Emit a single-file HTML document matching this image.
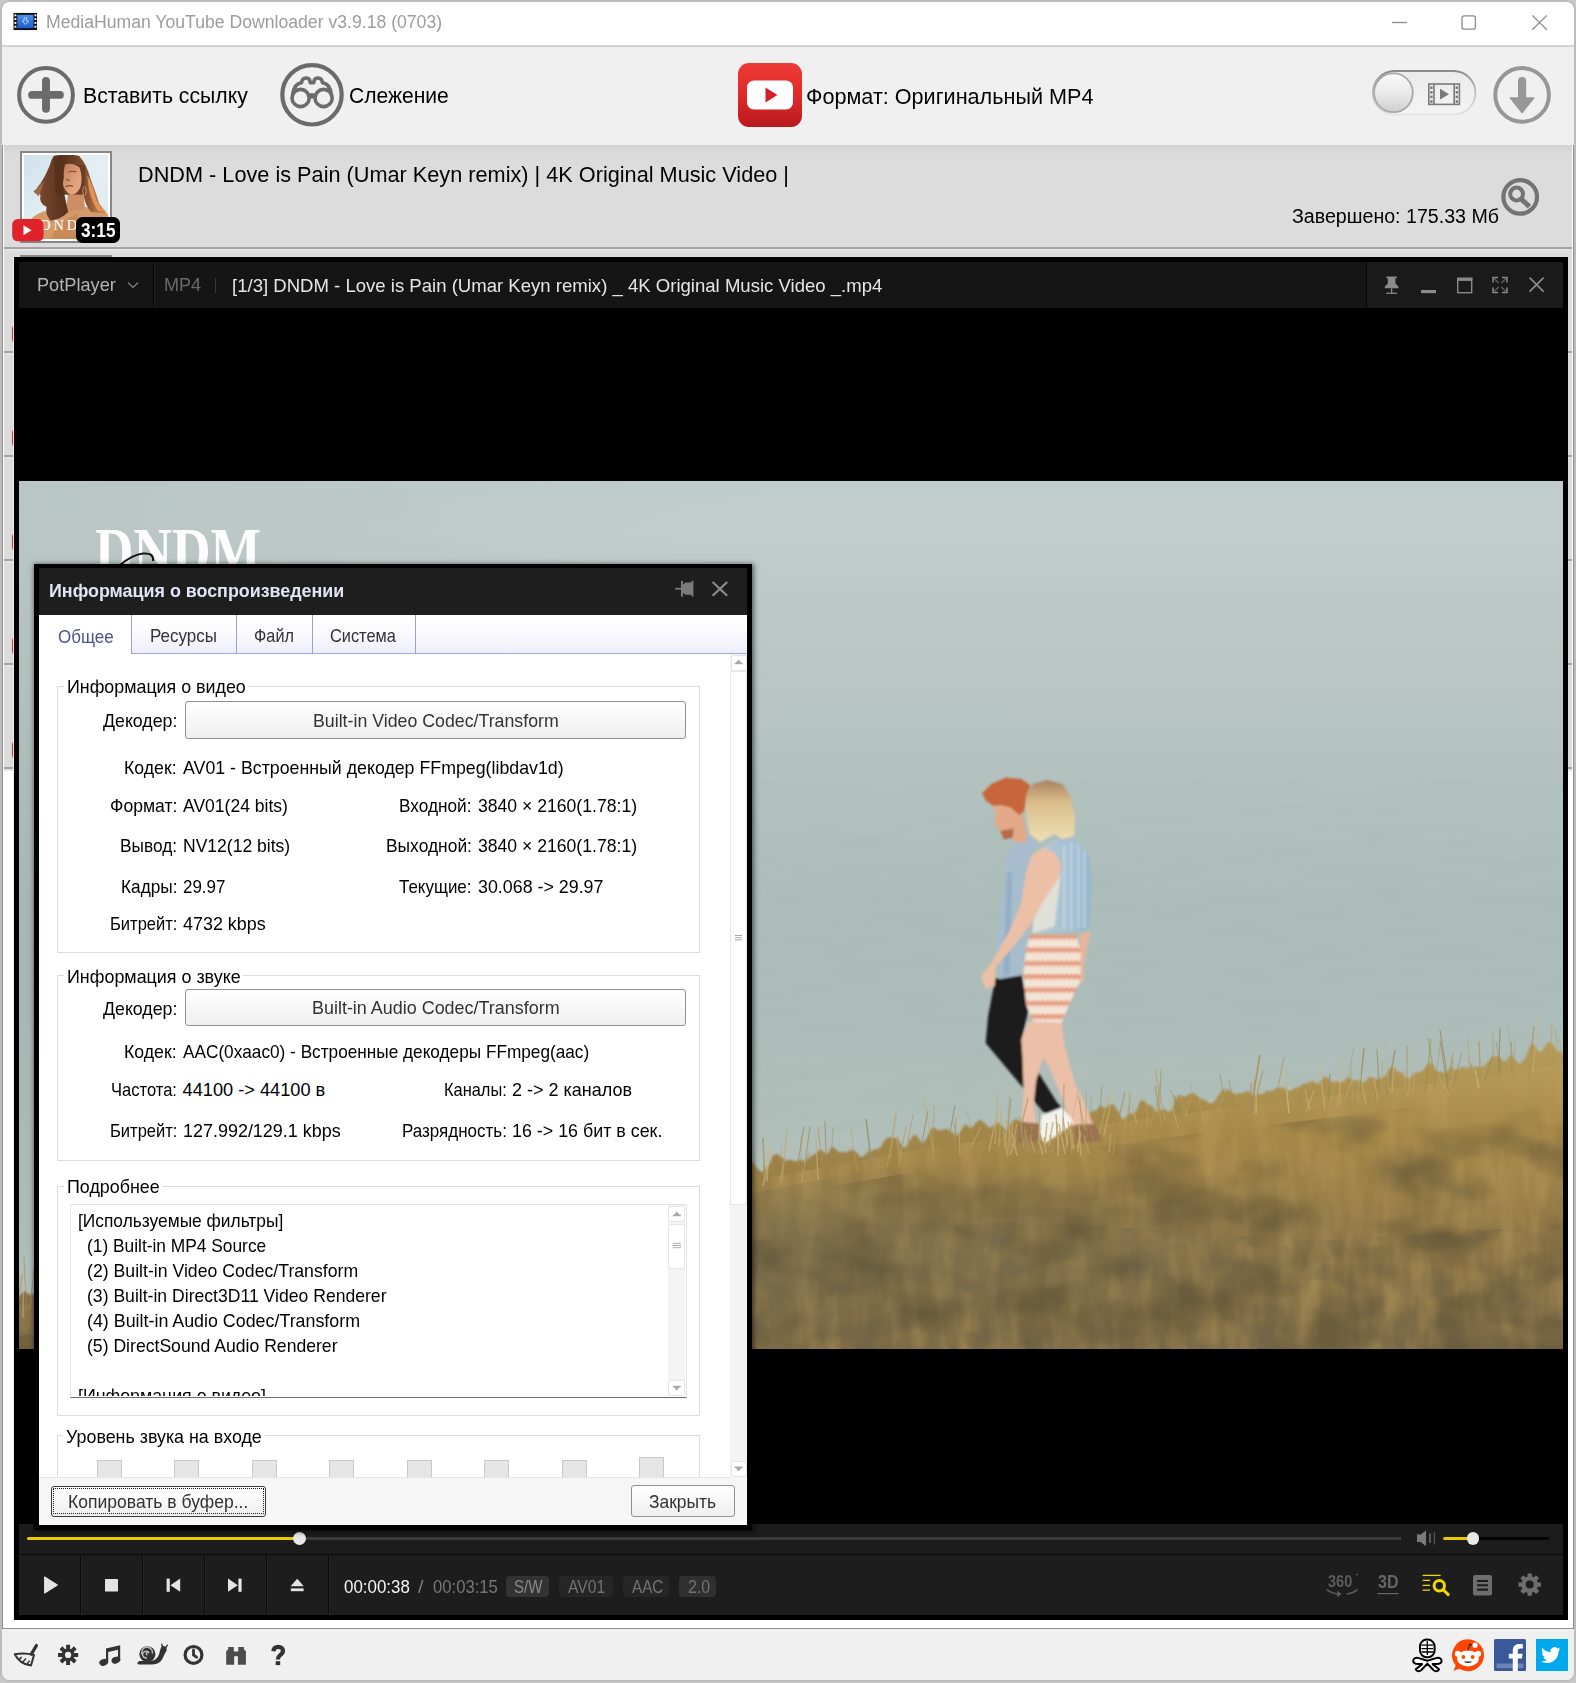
<!DOCTYPE html>
<html lang="ru">
<head>
<meta charset="utf-8">
<title>MediaHuman YouTube Downloader</title>
<style>
*{box-sizing:border-box;margin:0;padding:0}
html,body{width:1576px;height:1683px;overflow:hidden;background:#c9c9c9;font-family:"Liberation Sans",sans-serif}
body{font-family:"Liberation Sans",sans-serif;position:relative;color:#000}
.a{position:absolute}
.t{position:absolute;white-space:nowrap;line-height:1;transform-origin:0 50%;display:block}
</style>
</head>
<body>
<div class="a" style="left:0px;top:0px;width:1576px;height:1683px;background:#c9c9c9"></div>
<div class="a" style="left:0;top:0;width:1576px;height:1682px;background:#fff;border:2px solid #bcbcbc;border-radius:10px;overflow:hidden"></div>
<div class="a" style="left:2px;top:2px;width:1572px;height:43px;background:#fff;border-radius:8px 8px 0 0"></div>
<div class="a" style="left:2px;top:45px;width:1572px;height:2px;background:#d2d2d2"></div>
<div class="a" style="left:2px;top:47px;width:1572px;height:98px;background:#f0f0f0"></div>
<div class="a" style="left:2px;top:145px;width:1572px;height:1483px;background:#fff"></div>
<div class="a" style="left:2px;top:145px;width:1px;height:1483px;background:#8c8e92"></div>
<div class="a" style="left:1573px;top:145px;width:1px;height:1483px;background:#8c8e92"></div>
<div class="a" style="left:4px;top:145px;width:1568px;height:623px;background:#dcdcdc"></div>
<div class="a" style="left:4px;top:145px;width:1568px;height:10px;background:linear-gradient(#d2d2d2,#dcdcdc)"></div>
<div class="a" style="left:4px;top:247px;width:1568px;height:2px;background:#a5a3a3"></div>
<div class="a" style="left:4px;top:249px;width:1568px;height:2px;background:#e6e5e5"></div>
<div class="a" style="left:4px;top:351px;width:1568px;height:2px;background:#a5a3a3"></div>
<div class="a" style="left:4px;top:353px;width:1568px;height:2px;background:#e6e5e5"></div>
<div class="a" style="left:4px;top:455px;width:1568px;height:2px;background:#a5a3a3"></div>
<div class="a" style="left:4px;top:457px;width:1568px;height:2px;background:#e6e5e5"></div>
<div class="a" style="left:4px;top:559px;width:1568px;height:2px;background:#a5a3a3"></div>
<div class="a" style="left:4px;top:561px;width:1568px;height:2px;background:#e6e5e5"></div>
<div class="a" style="left:4px;top:663px;width:1568px;height:2px;background:#a5a3a3"></div>
<div class="a" style="left:4px;top:665px;width:1568px;height:2px;background:#e6e5e5"></div>
<div class="a" style="left:4px;top:767px;width:1568px;height:2px;background:#a5a3a3"></div>
<div class="a" style="left:4px;top:769px;width:1568px;height:2px;background:#e6e5e5"></div>
<div class="a" style="left:12px;top:323px;width:32px;height:22px;background:#e5262f;border-radius:6px"></div>
<div class="a" style="left:12px;top:427px;width:32px;height:22px;background:#e5262f;border-radius:6px"></div>
<div class="a" style="left:12px;top:531px;width:32px;height:22px;background:#e5262f;border-radius:6px"></div>
<div class="a" style="left:12px;top:635px;width:32px;height:22px;background:#e5262f;border-radius:6px"></div>
<div class="a" style="left:12px;top:739px;width:32px;height:22px;background:#e5262f;border-radius:6px"></div>
<div class="a" style="left:20px;top:255px;width:92px;height:2px;background:#8a8a8a"></div>
<div class="a" style="left:2px;top:1628px;width:1572px;height:1px;background:#8c8e92"></div>
<div class="a" style="left:2px;top:1629px;width:1572px;height:51px;background:#f0f0f0;border-radius:0 0 8px 8px"></div>
<svg class="a" style="left:12.600px;top:12.400px" width="24.800" height="19" viewBox="0 0 26 20" preserveAspectRatio="none">
<defs><linearGradient id="fb" x1="0" y1="0" x2="0" y2="1"><stop offset="0" stop-color="#4a8df0"/><stop offset="1" stop-color="#1c5fd0"/></linearGradient></defs>
<rect x=".5" y="1" width="25" height="18" fill="#111"/>
<rect x="4.5" y="3" width="17" height="14" fill="url(#fb)"/>
<g fill="#fff"><rect x="1.5" y="2.5" width="2" height="2"/><rect x="1.5" y="6.5" width="2" height="2"/><rect x="1.5" y="10.5" width="2" height="2"/><rect x="1.5" y="14.5" width="2" height="2"/>
<rect x="22.5" y="2.5" width="2" height="2"/><rect x="22.5" y="6.5" width="2" height="2"/><rect x="22.5" y="10.5" width="2" height="2"/><rect x="22.5" y="14.5" width="2" height="2"/></g>
<path d="M11.6 6.2h2.8v3.3h1.9L13 13.2 9.7 9.5h1.9z" fill="none" stroke="#cfe0ff" stroke-width=".9"/>
</svg>
<span class="t" style="left:45.80px;top:13.38px;font-size:18.8px;color:#9c9c9c;transform:scaleX(0.9382);">MediaHuman YouTube Downloader v3.9.18 (0703)</span>
<svg class="a" style="left:1380px;top:8px" width="180" height="30" viewBox="1380 8 180 30" fill="none" stroke="#8c8c8c" stroke-width="1.3">
<path d="M1392 22.5H1407"/><rect x="1462" y="15.8" width="13.4" height="13.4" rx="2.2"/><path d="M1532.3 15.4L1546.8 29.8M1546.8 15.4L1532.3 29.8"/></svg>
<svg class="a" style="left:10px;top:60px" width="440" height="72" viewBox="10 60 440 72">
<circle cx="46" cy="94.9" r="26.9" fill="none" stroke="#6b6b6b" stroke-width="4"/>
<path d="M46 81V108.8M32.100 94.900H59.900" stroke="#6b6b6b" stroke-width="7.900" stroke-linecap="round" fill="none"/>
<circle cx="312" cy="94.8" r="29.7" fill="none" stroke="#6b6b6b" stroke-width="4.2"/>
<g fill="none" stroke="#6b6b6b" stroke-width="3.6" stroke-linejoin="round">
<circle cx="300.6" cy="98" r="8.6"/><circle cx="323.6" cy="98" r="8.6"/>
<path d="M292.6 94.5C293.5 88 296 83.5 301.5 82.8 302 79.5 303.5 78 306.2 78 308.8 78 310 79.6 310.2 82.6H313.8C314 79.6 315.2 78 317.8 78 320.5 78 322 79.5 322.5 82.8 328 83.5 330.5 88 331.4 94.5"/>
<path d="M308.8 96.2Q312 93.6 315.2 96.2"/>
</g>
<ellipse cx="312" cy="97.4" rx="1.8" ry="1.3" fill="#6b6b6b"/>
</svg>
<span class="t" style="left:83.00px;top:85.20px;font-size:22.2px;color:#000;transform:scaleX(0.9565);">Вставить ссылку</span>
<span class="t" style="left:348.60px;top:85.20px;font-size:22.2px;color:#000;transform:scaleX(0.9482);">Слежение</span>
<svg class="a" style="left:737px;top:62px" width="66" height="66" viewBox="0 0 66 66">
<defs><linearGradient id="yt" x1="0" y1="0" x2="0" y2="1"><stop offset="0" stop-color="#ee3a36"/><stop offset=".5" stop-color="#e02b2b"/><stop offset="1" stop-color="#b8191e"/></linearGradient></defs>
<rect x="1" y="1" width="64" height="64" rx="11" fill="url(#yt)"/>
<rect x="10" y="18.5" width="46" height="29" rx="7" fill="#fff"/>
<path d="M28.5 25.5L40.5 33 28.5 40.5Z" fill="#d5202a"/>
</svg>
<span class="t" style="left:805.80px;top:85.80px;font-size:22.2px;color:#000;transform:scaleX(0.9741);">Формат: Оригинальный MP4</span>
<svg class="a" style="left:1366px;top:64px" width="116" height="58" viewBox="1366 64 116 58">
<defs><linearGradient id="tg" x1="0" y1="0" x2="0" y2="1"><stop offset="0" stop-color="#8a8a8a"/><stop offset=".5" stop-color="#c4c4c4"/><stop offset="1" stop-color="#e4e4e4"/></linearGradient>
<linearGradient id="tgi" x1="0" y1="0" x2="0" y2="1"><stop offset="0" stop-color="#ebebeb"/><stop offset="1" stop-color="#f4f4f4"/></linearGradient>
<linearGradient id="kn" x1="0" y1="0" x2="0" y2="1"><stop offset="0" stop-color="#fbfbfb"/><stop offset=".5" stop-color="#e9e9e9"/><stop offset="1" stop-color="#cfcfcf"/></linearGradient></defs>
<rect x="1372.8" y="71" width="102.6" height="43.6" rx="21.8" fill="url(#tgi)" stroke="url(#tg)" stroke-width="2"/>
<circle cx="1393.4" cy="92.8" r="19.4" fill="url(#kn)" stroke="#a9a9a9" stroke-width="1.8"/>
<g fill="none" stroke="#7a7a7a" stroke-width="1.6"><rect x="1428.8" y="84" width="30.6" height="20.4"/><path d="M1434 84V104.4M1454.2 84V104.4"/></g>
<g fill="#7a7a7a"><path d="M1440 88.8L1449 94.2 1440 99.6Z"/>
<rect x="1430.2" y="86.4" width="2.4" height="2.6"/><rect x="1430.2" y="91" width="2.4" height="2.6"/><rect x="1430.2" y="95.6" width="2.4" height="2.6"/><rect x="1430.2" y="100.2" width="2.4" height="2.6"/>
<rect x="1455.6" y="86.4" width="2.4" height="2.6"/><rect x="1455.6" y="91" width="2.4" height="2.6"/><rect x="1455.6" y="95.6" width="2.4" height="2.6"/><rect x="1455.6" y="100.2" width="2.4" height="2.6"/></g>
</svg>
<svg class="a" style="left:1490px;top:62px" width="66" height="66" viewBox="1490 62 66 66">
<circle cx="1522.1" cy="94.9" r="26.8" fill="none" stroke="#979797" stroke-width="4"/>
<path d="M1522.1 81V100" stroke="#979797" stroke-width="8.2" stroke-linecap="round"/>
<path d="M1510.600 98H1533.600L1522.100 112.400Z" fill="#979797" stroke="#979797" stroke-width="1.600" stroke-linejoin="round"/>
</svg>
<div class="a" style="left:20px;top:151px;width:92px;height:92px;background:#fff;border:2px solid #878787"></div>
<svg class="a" style="left:24px;top:155px" width="84" height="84" viewBox="207 117 1108 1108">
<defs><linearGradient id="tsky" x1="0" y1="0" x2="1" y2="1"><stop offset="0" stop-color="#cfe2ea"/><stop offset=".5" stop-color="#e4eff3"/><stop offset="1" stop-color="#dfe9ec"/></linearGradient>
<linearGradient id="thair" x1="0" y1="0" x2="1" y2="0"><stop offset="0" stop-color="#7a4a30"/><stop offset=".4" stop-color="#5a331f"/><stop offset=".72" stop-color="#8a5231"/><stop offset="1" stop-color="#d98a50"/></linearGradient>
<linearGradient id="tskin" x1="0" y1="0" x2="1" y2="1"><stop offset="0" stop-color="#b9795a"/><stop offset=".6" stop-color="#dfa07a"/><stop offset="1" stop-color="#e8ab82"/></linearGradient>
<filter id="tb" x="-10%" y="-10%" width="120%" height="120%"><feGaussianBlur stdDeviation="9"/></filter></defs>
<rect x="207" y="117" width="1108" height="1108" fill="url(#tsky)"/>
<g filter="url(#tb)">
<path d="M300 1225V960Q380 880 520 850L1000 800Q1200 820 1315 900V1225Z" fill="#d39a6c"/>
<path d="M560 1225Q640 1000 900 900L1040 1225Z" fill="#c98a58"/>
<path d="M790 600L985 560 1010 830 760 870Z" fill="#cf8d66"/>
<path d="M600 130Q760 85 935 130 1040 250 1080 420 1150 600 1200 760 1260 840 1300 885L1090 870Q1000 760 985 600L960 300 700 260Q690 500 740 640L790 870Q700 965 560 985 480 900 505 800 400 760 425 640 325 590 420 500 500 380 545 260 560 180 600 130Z" fill="url(#thair)"/>
<path d="M700 250H1010V640H700Z" fill="#6a3d25"/>
<path d="M720 250Q840 200 940 282 986 420 950 545 900 645 820 642 742 600 712 480 700 350 720 250Z" fill="url(#tskin)"/>
<path d="M600 130Q700 118 765 200 722 300 732 420 702 520 742 640 700 705 640 640 598 500 620 380 598 250 600 130Z" fill="#56301d"/>
<path d="M1040 380Q1120 520 1160 700 1200 800 1285 865L1180 855Q1100 740 1062 560Z" fill="#e0935a"/>
<path d="M330 600Q400 540 470 470 440 580 400 660Z" fill="#9a6a4a"/>
</g>
<g stroke="#6d3b2a" stroke-width="16" fill="none" stroke-linecap="round" opacity=".85"><path d="M800 342Q845 322 890 340"/><path d="M760 532Q800 512 848 528"/><path d="M770 440L800 452"/></g>
<ellipse cx="1005" cy="590" rx="22" ry="58" fill="none" stroke="#e9c7a0" stroke-width="9" opacity=".9"/>
<text x="420" y="1110" font-family="Liberation Serif,serif" font-size="190" fill="#fff" letter-spacing="38">DNDM</text>
</svg>
<svg class="a" style="left:12px;top:219px" width="32" height="23" viewBox="0 0 32 23"><rect x=".2" y=".1" width="31.4" height="22.2" rx="5.5" fill="#e0222b"/><path d="M11.5 6.2L19.6 11.2 11.5 16.2Z" fill="#fff"/></svg>
<div class="a" style="left:76px;top:217px;width:44px;height:26px;background:#000;border-radius:6.5px"></div>
<span class="t" style="left:80.90px;top:220.57px;font-size:19.4px;color:#fff;font-weight:bold;transform:scaleX(0.8877);">3:15</span>
<span class="t" style="left:138.20px;top:163.70px;font-size:22.2px;color:#000;transform:scaleX(0.9777);">DNDM - Love is Pain (Umar Keyn remix) | 4K Original Music Video |</span>
<span class="t" style="left:1292.20px;top:205.97px;font-size:20px;color:#000;transform:scaleX(0.9804);">Завершено: 175.33 Мб</span>
<svg class="a" style="left:1498px;top:175px" width="44" height="44" viewBox="1498 175 44 44">
<circle cx="1520.2" cy="196.9" r="16.8" fill="none" stroke="#737373" stroke-width="4.2"/>
<circle cx="1516.6" cy="194" r="6.4" fill="none" stroke="#737373" stroke-width="4"/>
<path d="M1521.6 199.4L1529.4 206.6" stroke="#737373" stroke-width="5" stroke-linecap="butt"/>
</svg>
<div class="a" style="left:14px;top:257px;width:1554px;height:1363px;background:#000"></div>
<div class="a" style="left:13px;top:257px;width:1px;height:1363px;background:#eee"></div>
<div class="a" style="left:19px;top:262px;width:1544px;height:46px;background:#151515"></div>
<div class="a" style="left:153px;top:262px;width:1px;height:46px;background:#050505"></div>
<div class="a" style="left:154px;top:262px;width:1px;height:46px;background:#1f1f1f"></div>
<div class="a" style="left:1366px;top:262px;width:1px;height:46px;background:#050505"></div>
<div class="a" style="left:1367px;top:262px;width:196px;height:46px;background:#1a1a1a"></div>
<span class="t" style="left:36.60px;top:275.92px;font-size:18.4px;color:#b4b4b4;transform:scaleX(0.9881);">PotPlayer</span>
<svg class="a" style="left:126px;top:280px" width="14" height="10" viewBox="0 0 14 10"><path d="M2 2.600L7 7.400 12 2.600" fill="none" stroke="#8a8a8a" stroke-width="1.300"/></svg>
<span class="t" style="left:163.60px;top:275.85px;font-size:18.6px;color:#6a6a6a;transform:scaleX(0.9695);">MP4</span>
<div class="a" style="left:215px;top:278px;width:1px;height:15px;background:#3a3a3a"></div>
<span class="t" style="left:232.00px;top:276.31px;font-size:19px;color:#e6e6e6;transform:scaleX(0.9766);">[1/3] DNDM - Love is Pain (Umar Keyn remix) _ 4K Original Music Video _.mp4</span>
<svg class="a" style="left:1376px;top:270px" width="184" height="32" viewBox="1376 270 184 32">
<g fill="#8a8a8a"><path d="M1386.600 1270"/>
<path d="M1386.400 276.400h10.400v1.800h-1.400v5.400l3 3v1.600h-13.600v-1.600l3-3v-5.400h-1.400z"/><rect x="1390.900" y="288.200" width="1.400" height="4.600"/><rect x="1386.200" y="292.600" width="10.800" height="1.300"/>
<rect x="1421" y="290" width="15" height="3.200"/>
</g>
<g fill="none" stroke="#8a8a8a"><rect x="1457.700" y="278.700" width="14" height="14" stroke-width="1.400"/><path d="M1457 279.200h15.400" stroke-width="3.400"/>
<path d="M1493 282.400v-5h5M1502 277.400h5v5M1507 287.600v5h-5M1498 292.600h-5v-5" stroke-width="1.500"/>
<path d="M1494 278.400l4.600 4.600M1506 278.400l-4.600 4.600M1494 291.600l4.600-4.600M1506 291.600l-4.600-4.600" stroke-width="1.100" stroke="#6a6a6a"/>
<path d="M1529.600 277.600l14 14M1543.600 277.600l-14 14" stroke-width="1.700"/></g>
</svg>
<div class="a" style="left:19px;top:481px;width:1544px;height:868px;overflow:hidden;background:#c2cfcf"><svg class="a" style="left:0;top:0" width="1544" height="868" viewBox="0 0 1544 868">
<defs>
<linearGradient id="sky" x1="0" y1="0" x2="0" y2="1"><stop offset="0" stop-color="#c0cccc"/><stop offset=".06" stop-color="#c1cccc"/><stop offset=".14" stop-color="#bdc9c8"/><stop offset=".25" stop-color="#b8c5c3"/><stop offset=".37" stop-color="#b1c1be"/><stop offset=".48" stop-color="#adbdba"/><stop offset=".6" stop-color="#adbdb9"/><stop offset=".71" stop-color="#b0beb9"/><stop offset=".83" stop-color="#b4c1bc"/><stop offset="1" stop-color="#b8c4be"/></linearGradient>
<linearGradient id="skyL" x1="0" y1="0" x2="1" y2="0"><stop offset="0" stop-color="#5a7470" stop-opacity=".07"/><stop offset=".3" stop-color="#5a7470" stop-opacity=".02"/><stop offset=".6" stop-color="#fff" stop-opacity="0"/></linearGradient>
<linearGradient id="hill" x1="0" y1="0" x2="0" y2="1"><stop offset="0" stop-color="#b89d5a"/><stop offset=".25" stop-color="#a58848"/><stop offset=".55" stop-color="#907746"/><stop offset="1" stop-color="#786846"/></linearGradient>
<filter color-interpolation-filters="sRGB" id="grass" x="0" y="0" width="100%" height="100%"><feTurbulence type="fractalNoise" baseFrequency="0.05 0.012" numOctaves="3" seed="7" result="n"/><feColorMatrix in="n" type="matrix" values="0 0 0 0 0.74  0 0 0 0 0.62  0 0 0 0 0.37  1.6 0 0 0 -0.62" result="c"/><feComposite in="c" in2="SourceGraphic" operator="in"/></filter>
<filter color-interpolation-filters="sRGB" id="grassd" x="0" y="0" width="100%" height="100%"><feTurbulence type="fractalNoise" baseFrequency="0.03 0.03" numOctaves="3" seed="3" result="n"/><feColorMatrix in="n" type="matrix" values="0 0 0 0 0.38  0 0 0 0 0.35  0 0 0 0 0.27  0 2.2 0 0 -0.95" result="c"/><feComposite in="c" in2="SourceGraphic" operator="in"/></filter>
<filter id="edge" x="-5%" y="-20%" width="110%" height="140%"><feTurbulence type="fractalNoise" baseFrequency="0.06 0.01" numOctaves="2" seed="11" result="n"/><feDisplacementMap in="SourceGraphic" in2="n" scale="34" xChannelSelector="R" yChannelSelector="G"/><feGaussianBlur stdDeviation="1.2"/></filter>
<filter color-interpolation-filters="sRGB" id="sea" x="0" y="0" width="100%" height="100%"><feTurbulence type="fractalNoise" baseFrequency="0.015 0.09" numOctaves="2" seed="5" result="n"/><feColorMatrix in="n" type="matrix" values="0 0 0 0 0.62  0 0 0 0 0.69  0 0 0 0 0.68  1.1 0 0 0 -0.5"/></filter>
<filter color-interpolation-filters="sRGB" id="blot" x="0" y="0" width="100%" height="100%"><feTurbulence type="fractalNoise" baseFrequency="0.011 0.02" numOctaves="3" seed="21" result="n"/><feColorMatrix in="n" type="matrix" values="0 0 0 0 0.33  0 0 0 0 0.29  0 0 0 0 0.19  2.8 0 0 0 -1.18" result="c"/><feComposite in="c" in2="SourceGraphic" operator="in"/></filter>
<radialGradient id="llg" cx=".3" cy="1.05" r=".6" gradientTransform="scale(1 .55)"><stop offset="0" stop-color="#67644f" stop-opacity=".55"/><stop offset=".6" stop-color="#67644f" stop-opacity=".25"/><stop offset="1" stop-color="#67644f" stop-opacity="0"/></radialGradient>
<filter id="softp" x="-5%" y="-5%" width="110%" height="110%"><feGaussianBlur stdDeviation="0.9"/></filter>
<filter id="soft"><feGaussianBlur stdDeviation="1.6"/></filter>
<filter id="soft2"><feGaussianBlur stdDeviation="5"/></filter>
<pattern id="zig" width="40" height="56" patternUnits="userSpaceOnUse"><rect width="40" height="56" fill="#f3e4d6"/><path d="M0 10 L10 0 L20 10 L30 0 L40 10 L40 30 L30 20 L20 30 L10 20 L0 30Z" fill="#e79b80"/></pattern>
<linearGradient id="hairw" x1="0" y1="0" x2="0" y2="1"><stop offset="0" stop-color="#a9805f"/><stop offset=".35" stop-color="#d9bd8a"/><stop offset="1" stop-color="#efe0b6"/></linearGradient>
<linearGradient id="vestw" x1="0" y1="0" x2="1" y2="0"><stop offset="0" stop-color="#cdd8da"/><stop offset=".35" stop-color="#aec4d2"/><stop offset=".7" stop-color="#a3c0d6"/><stop offset="1" stop-color="#97b6d0"/></linearGradient>
</defs>
<rect width="1544" height="868" fill="url(#sky)"/>
<rect width="1544" height="868" fill="url(#skyL)"/>
<rect y="300" width="1544" height="400" filter="url(#sea)" opacity=".3"/>
<!-- logo -->
<text x="76" y="92" font-family="Liberation Serif,serif" font-size="66" font-weight="bold" fill="#fdfdfd" textLength="166" lengthAdjust="spacingAndGlyphs">DNDM</text>
<path d="M100 85Q112 74 124 72.500 135 71.500 134 80" fill="none" stroke="#151515" stroke-width="2"/>
<!-- hill -->
<g filter="url(#edge)">
<path d="M-40 820 L300 770 L733 688 L900 655 L1200 615 L1400 590 L1600 560 L1600 900 L-40 900Z" fill="url(#hill)"/>
</g>
<path d="M-40 830 L300 785 L733 700 L900 668 L1200 628 L1400 604 L1600 575 L1600 900 L-40 900Z" fill="url(#hill)"/>
<path d="M-40 830 L300 785 L733 700 L900 668 L1200 628 L1400 604 L1600 575 L1600 900 L-40 900Z" fill="#000" filter="url(#grass)" opacity=".7"/>
<path d="M-40 860 L733 760 L1000 740 L1300 760 L1600 740 L1600 900 L-40 900Z" fill="#000" filter="url(#grassd)" opacity=".55"/>
<path d="M-40 840 L300 795 L733 712 L900 680 L1200 640 L1400 616 L1600 590 L1600 900 L-40 900Z" fill="url(#llg)"/>
<path d="M-40 850 L300 805 L733 720 L900 690 L1200 650 L1400 626 L1600 600 L1600 900 L-40 900Z" fill="#000" filter="url(#blot)" opacity=".5"/>
<!-- people -->
<g filter="url(#softp)"><g transform="translate(931 279) scale(.23778)">
<path d="M190 920 L300 900 L330 1050 L300 1180 L335 1255 L450 1440 L478 1470 L420 1492 L392 1480 L300 1370 L200 1250 L150 1190 L160 1080Z" fill="#1b1b1f"/>
<path d="M230 400 L290 340 L330 318 L372 360 L340 400 L318 520 L322 620 L322 760 L302 905 L205 922 L195 780 L215 600 L235 470Z" fill="#a7bccc"/>
<path d="M240 470 L262 472 L250 900 L225 905Z" fill="#86a6c2" opacity=".6"/>
<path d="M180 190 L255 192 L305 228 L320 300 L322 345 L280 348 L262 326 L225 332 L210 300 L185 265 L195 230Z" fill="#e3a988"/>
<path d="M212 298 L268 288 L264 326 L226 334Z" fill="#b86a48"/>
<path d="M135 140 L175 100 L235 74 L300 80 L338 106 L322 150 L312 216 L292 232 L255 200 L215 190 L180 192 L150 170Z" fill="#c8663a"/>
<!-- woman -->
<path d="M545 735 L592 720 L578 780 L562 870 L562 932 L546 942 L540 880 L548 800Z" fill="#e7b59b"/>
<path d="M330 1100 L470 1105 L482 1200 L522 1350 L572 1460 L602 1530 L520 1548 L470 1420 L420 1300 L392 1250 L362 1350 L352 1450 L366 1540 L300 1536 L310 1400 L305 1250 L300 1180Z" fill="#ecbfa8"/>
<path d="M385 1495 L470 1460 L522 1520 L500 1546 L400 1612 L375 1590Z" fill="#f4f2ee"/>
<path d="M290 1520 L375 1530 L380 1604 L280 1612Z" fill="#9b7350"/>
<path d="M520 1535 L610 1530 L642 1602 L530 1612Z" fill="#9b7350"/>
<path d="M335 735 L530 735 L550 800 L548 930 L500 1030 L470 1105 L350 1100 L320 1030 L308 900 L320 800Z" fill="url(#zig)"/>
<path d="M400 560 L470 470 L480 700 L345 726 L355 640Z" fill="#dfe0d6"/>
<path d="M385 370 L450 335 L520 335 L582 390 L597 500 L587 700 L560 718 L345 728 L440 700 L462 520 L468 440 L440 395 L400 375Z" fill="url(#vestw)"/>
<path d="M480 360V715M510 350V712M540 356V708M565 380V704" stroke="#dfe8ea" stroke-width="9" opacity=".5" fill="none"/>
<path d="M345 400 L390 370 L440 390 L468 440 L456 500 L400 580 L340 690 L262 790 L192 870 L188 950 L150 962 L130 910 L170 860 L250 720 L300 600 L320 470Z" fill="#ecc0a6"/>
<path d="M320 150 L350 100 L410 84 L470 100 L506 150 L526 240 L521 320 L470 332 L440 310 L380 346 L335 310 L320 230Z" fill="url(#hairw)"/>
</g></g>
<!-- blades -->
<g><path d="M358 777 q-3 -17 -7 -34" stroke="#b7a066" stroke-width="1.2" fill="none" opacity="0.36"/><path d="M441 771 q0 -10 0 -20" stroke="#c2ad74" stroke-width="0.9" fill="none" opacity="0.47"/><path d="M156 809 q3 -28 7 -55" stroke="#c2ad74" stroke-width="1.0" fill="none" opacity="0.71"/><path d="M473 760 q4 -24 7 -47" stroke="#c2ad74" stroke-width="1.3" fill="none" opacity="0.39"/><path d="M1038 658 q-0 -13 -1 -25" stroke="#b7a066" stroke-width="1.5" fill="none" opacity="0.78"/><path d="M1460 607 q-2 -9 -4 -18" stroke="#cdb985" stroke-width="1.5" fill="none" opacity="0.75"/><path d="M783 697 q-1 -21 -1 -42" stroke="#a8935c" stroke-width="1.0" fill="none" opacity="0.45"/><path d="M1234 627 q5 -18 10 -37" stroke="#9d8a55" stroke-width="1.2" fill="none" opacity="0.59"/><path d="M525 755 q-1 -13 -2 -26" stroke="#a8935c" stroke-width="1.2" fill="none" opacity="0.64"/><path d="M277 795 q1 -21 3 -42" stroke="#a8935c" stroke-width="0.9" fill="none" opacity="0.76"/><path d="M86 818 q1 -24 2 -49" stroke="#a8935c" stroke-width="1.5" fill="none" opacity="0.40"/><path d="M444 759 q-4 -16 -8 -32" stroke="#c2ad74" stroke-width="1.6" fill="none" opacity="0.68"/><path d="M18 828 q3 -28 6 -57" stroke="#8f8a5c" stroke-width="1.5" fill="none" opacity="0.74"/><path d="M1051 651 q4 -21 8 -43" stroke="#c2ad74" stroke-width="1.1" fill="none" opacity="0.41"/><path d="M1490 597 q-5 -9 -9 -18" stroke="#a8935c" stroke-width="1.4" fill="none" opacity="0.51"/><path d="M1546 592 q-3 -18 -6 -36" stroke="#a8935c" stroke-width="0.8" fill="none" opacity="0.40"/><path d="M1140 645 q1 -28 2 -57" stroke="#9d8a55" stroke-width="1.0" fill="none" opacity="0.57"/><path d="M1546 586 q3 -20 5 -39" stroke="#8f8a5c" stroke-width="1.0" fill="none" opacity="0.64"/><path d="M305 791 q-3 -19 -6 -38" stroke="#8f8a5c" stroke-width="1.5" fill="none" opacity="0.46"/><path d="M1286 626 q-2 -10 -5 -19" stroke="#a8935c" stroke-width="1.4" fill="none" opacity="0.59"/><path d="M641 723 q4 -16 8 -31" stroke="#c2ad74" stroke-width="1.6" fill="none" opacity="0.60"/><path d="M619 735 q3 -22 6 -44" stroke="#cdb985" stroke-width="1.1" fill="none" opacity="0.37"/><path d="M661 727 q4 -20 9 -41" stroke="#a8935c" stroke-width="1.3" fill="none" opacity="0.50"/><path d="M1237 633 q0 -25 1 -51" stroke="#cdb985" stroke-width="1.4" fill="none" opacity="0.71"/><path d="M518 749 q4 -19 7 -38" stroke="#c2ad74" stroke-width="1.3" fill="none" opacity="0.78"/><path d="M59 830 q5 -12 9 -23" stroke="#cdb985" stroke-width="1.5" fill="none" opacity="0.74"/><path d="M1063 654 q-1 -18 -2 -37" stroke="#8f8a5c" stroke-width="0.8" fill="none" opacity="0.45"/><path d="M1429 602 q-4 -27 -8 -53" stroke="#8f8a5c" stroke-width="1.2" fill="none" opacity="0.75"/><path d="M1361 613 q-2 -22 -3 -45" stroke="#9d8a55" stroke-width="1.2" fill="none" opacity="0.70"/><path d="M811 687 q1 -10 2 -19" stroke="#8f8a5c" stroke-width="1.0" fill="none" opacity="0.60"/><path d="M1198 631 q4 -11 8 -21" stroke="#b7a066" stroke-width="1.1" fill="none" opacity="0.48"/><path d="M107 824 q-3 -18 -6 -36" stroke="#c2ad74" stroke-width="1.4" fill="none" opacity="0.52"/><path d="M1325 620 q4 -11 8 -21" stroke="#c2ad74" stroke-width="1.1" fill="none" opacity="0.58"/><path d="M1328 624 q4 -10 8 -21" stroke="#a8935c" stroke-width="1.5" fill="none" opacity="0.64"/><path d="M737 703 q-1 -20 -3 -40" stroke="#a8935c" stroke-width="0.9" fill="none" opacity="0.43"/><path d="M761 701 q4 -20 8 -40" stroke="#cdb985" stroke-width="1.3" fill="none" opacity="0.43"/><path d="M179 804 q1 -25 2 -49" stroke="#9d8a55" stroke-width="1.0" fill="none" opacity="0.38"/><path d="M1312 621 q5 -24 10 -49" stroke="#cdb985" stroke-width="0.8" fill="none" opacity="0.35"/><path d="M1406 612 q3 -27 6 -54" stroke="#9d8a55" stroke-width="1.5" fill="none" opacity="0.49"/><path d="M1217 635 q-4 -18 -7 -36" stroke="#9d8a55" stroke-width="1.3" fill="none" opacity="0.51"/><path d="M198 802 q3 -12 6 -24" stroke="#a8935c" stroke-width="1.6" fill="none" opacity="0.48"/><path d="M298 797 q4 -22 8 -45" stroke="#b7a066" stroke-width="1.5" fill="none" opacity="0.53"/><path d="M270 799 q-2 -16 -4 -31" stroke="#b7a066" stroke-width="1.2" fill="none" opacity="0.62"/><path d="M1167 635 q3 -16 6 -32" stroke="#b7a066" stroke-width="1.3" fill="none" opacity="0.42"/><path d="M763 703 q3 -28 5 -56" stroke="#b7a066" stroke-width="1.2" fill="none" opacity="0.43"/><path d="M1373 612 q2 -25 3 -49" stroke="#cdb985" stroke-width="1.3" fill="none" opacity="0.53"/><path d="M1389 616 q-3 -15 -5 -30" stroke="#c2ad74" stroke-width="1.2" fill="none" opacity="0.59"/><path d="M695 719 q5 -19 9 -38" stroke="#c2ad74" stroke-width="1.1" fill="none" opacity="0.48"/><path d="M11 828 q2 -20 4 -40" stroke="#9d8a55" stroke-width="1.1" fill="none" opacity="0.72"/><path d="M596 729 q-0 -19 -1 -38" stroke="#cdb985" stroke-width="1.3" fill="none" opacity="0.76"/><path d="M477 753 q-3 -14 -6 -28" stroke="#8f8a5c" stroke-width="1.4" fill="none" opacity="0.75"/><path d="M222 800 q4 -15 9 -30" stroke="#a8935c" stroke-width="1.3" fill="none" opacity="0.53"/><path d="M958 671 q-5 -20 -10 -40" stroke="#a8935c" stroke-width="0.9" fill="none" opacity="0.42"/><path d="M40 825 q-4 -11 -9 -23" stroke="#cdb985" stroke-width="1.5" fill="none" opacity="0.48"/><path d="M1085 654 q5 -22 9 -44" stroke="#cdb985" stroke-width="1.2" fill="none" opacity="0.67"/><path d="M1072 656 q0 -20 0 -40" stroke="#a8935c" stroke-width="1.0" fill="none" opacity="0.45"/><path d="M782 697 q4 -12 8 -25" stroke="#9d8a55" stroke-width="1.3" fill="none" opacity="0.53"/><path d="M1334 618 q-1 -17 -2 -33" stroke="#b7a066" stroke-width="1.3" fill="none" opacity="0.48"/><path d="M464 764 q-4 -11 -8 -21" stroke="#9d8a55" stroke-width="1.0" fill="none" opacity="0.72"/><path d="M853 685 q-3 -23 -6 -47" stroke="#8f8a5c" stroke-width="1.4" fill="none" opacity="0.80"/><path d="M1427 613 q3 -17 7 -33" stroke="#9d8a55" stroke-width="0.9" fill="none" opacity="0.61"/><path d="M956 673 q1 -15 3 -30" stroke="#8f8a5c" stroke-width="0.8" fill="none" opacity="0.62"/><path d="M976 663 q2 -26 3 -52" stroke="#c2ad74" stroke-width="1.2" fill="none" opacity="0.70"/><path d="M1291 629 q-3 -11 -5 -21" stroke="#c2ad74" stroke-width="1.3" fill="none" opacity="0.75"/><path d="M1080 653 q5 -20 10 -39" stroke="#c2ad74" stroke-width="0.9" fill="none" opacity="0.77"/><path d="M57 825 q2 -26 4 -51" stroke="#b7a066" stroke-width="0.9" fill="none" opacity="0.44"/><path d="M1209 640 q-4 -23 -8 -46" stroke="#9d8a55" stroke-width="0.9" fill="none" opacity="0.73"/><path d="M343 782 q4 -28 8 -56" stroke="#b7a066" stroke-width="1.4" fill="none" opacity="0.35"/><path d="M323 786 q-2 -24 -3 -48" stroke="#c2ad74" stroke-width="1.3" fill="none" opacity="0.74"/><path d="M618 727 q-4 -19 -9 -38" stroke="#9d8a55" stroke-width="1.0" fill="none" opacity="0.74"/><path d="M1068 657 q-1 -23 -1 -46" stroke="#a8935c" stroke-width="1.2" fill="none" opacity="0.45"/><path d="M672 726 q4 -16 8 -31" stroke="#cdb985" stroke-width="1.1" fill="none" opacity="0.77"/><path d="M1160 638 q-4 -15 -8 -29" stroke="#8f8a5c" stroke-width="1.0" fill="none" opacity="0.47"/><path d="M1417 605 q-4 -24 -8 -48" stroke="#a8935c" stroke-width="1.4" fill="none" opacity="0.63"/><path d="M1448 602 q1 -13 3 -27" stroke="#b7a066" stroke-width="0.8" fill="none" opacity="0.64"/><path d="M879 676 q0 -11 0 -22" stroke="#b7a066" stroke-width="1.6" fill="none" opacity="0.40"/><path d="M453 764 q4 -22 8 -44" stroke="#b7a066" stroke-width="1.6" fill="none" opacity="0.65"/><path d="M1393 616 q3 -24 6 -48" stroke="#cdb985" stroke-width="0.8" fill="none" opacity="0.44"/><path d="M496 752 q1 -29 2 -57" stroke="#c2ad74" stroke-width="0.9" fill="none" opacity="0.79"/><path d="M1168 635 q-3 -10 -7 -20" stroke="#b7a066" stroke-width="1.0" fill="none" opacity="0.65"/><path d="M1427 610 q3 -19 7 -38" stroke="#a8935c" stroke-width="1.3" fill="none" opacity="0.53"/><path d="M764 700 q-1 -18 -2 -35" stroke="#b7a066" stroke-width="0.8" fill="none" opacity="0.69"/><path d="M229 799 q1 -14 1 -28" stroke="#a8935c" stroke-width="1.3" fill="none" opacity="0.77"/><path d="M589 737 q-3 -11 -6 -22" stroke="#c2ad74" stroke-width="1.2" fill="none" opacity="0.43"/><path d="M23 825 q2 -15 4 -30" stroke="#c2ad74" stroke-width="1.2" fill="none" opacity="0.77"/><path d="M55 823 q-1 -23 -2 -47" stroke="#a8935c" stroke-width="1.3" fill="none" opacity="0.80"/><path d="M537 741 q-1 -23 -1 -46" stroke="#cdb985" stroke-width="1.4" fill="none" opacity="0.70"/><path d="M643 721 q1 -15 1 -30" stroke="#b7a066" stroke-width="1.6" fill="none" opacity="0.57"/><path d="M812 689 q1 -21 2 -43" stroke="#9d8a55" stroke-width="1.3" fill="none" opacity="0.36"/><path d="M587 733 q1 -21 2 -41" stroke="#a8935c" stroke-width="1.0" fill="none" opacity="0.43"/><path d="M669 718 q-3 -22 -7 -43" stroke="#c2ad74" stroke-width="1.5" fill="none" opacity="0.77"/><path d="M1019 661 q1 -16 2 -32" stroke="#9d8a55" stroke-width="0.9" fill="none" opacity="0.36"/><path d="M880 684 q3 -19 7 -38" stroke="#b7a066" stroke-width="1.3" fill="none" opacity="0.75"/><path d="M1531 589 q1 -23 2 -46" stroke="#b7a066" stroke-width="1.1" fill="none" opacity="0.59"/><path d="M1454 607 q3 -10 7 -20" stroke="#a8935c" stroke-width="1.0" fill="none" opacity="0.59"/><path d="M79 822 q-3 -26 -6 -53" stroke="#8f8a5c" stroke-width="1.2" fill="none" opacity="0.69"/><path d="M1166 635 q4 -12 8 -24" stroke="#b7a066" stroke-width="1.2" fill="none" opacity="0.35"/><path d="M1322 626 q-1 -10 -1 -21" stroke="#b7a066" stroke-width="1.4" fill="none" opacity="0.71"/><path d="M41 824 q-3 -23 -6 -45" stroke="#a8935c" stroke-width="1.5" fill="none" opacity="0.44"/><path d="M1430 614 q-5 -9 -10 -18" stroke="#c2ad74" stroke-width="1.2" fill="none" opacity="0.58"/><path d="M91 821 q-3 -16 -7 -32" stroke="#a8935c" stroke-width="1.2" fill="none" opacity="0.58"/><path d="M1066 649 q-4 -18 -7 -35" stroke="#b7a066" stroke-width="1.2" fill="none" opacity="0.78"/><path d="M791 699 q1 -12 2 -23" stroke="#9d8a55" stroke-width="0.9" fill="none" opacity="0.64"/><path d="M1480 596 q0 -24 1 -49" stroke="#8f8a5c" stroke-width="1.3" fill="none" opacity="0.70"/><path d="M1493 594 q-0 -16 -1 -33" stroke="#9d8a55" stroke-width="1.6" fill="none" opacity="0.55"/><path d="M1547 592 q1 -10 1 -19" stroke="#a8935c" stroke-width="1.3" fill="none" opacity="0.47"/><path d="M885 680 q4 -23 9 -46" stroke="#a8935c" stroke-width="1.1" fill="none" opacity="0.49"/><path d="M458 760 q-0 -13 -0 -26" stroke="#c2ad74" stroke-width="1.5" fill="none" opacity="0.47"/><path d="M249 795 q4 -14 8 -27" stroke="#cdb985" stroke-width="0.9" fill="none" opacity="0.73"/><path d="M139 820 q-5 -10 -10 -19" stroke="#b7a066" stroke-width="1.3" fill="none" opacity="0.74"/><path d="M268 802 q1 -16 3 -33" stroke="#8f8a5c" stroke-width="1.2" fill="none" opacity="0.46"/><path d="M1132 643 q3 -11 6 -22" stroke="#b7a066" stroke-width="1.1" fill="none" opacity="0.43"/><path d="M602 730 q-5 -23 -9 -45" stroke="#a8935c" stroke-width="1.1" fill="none" opacity="0.79"/><path d="M535 749 q-1 -9 -3 -18" stroke="#8f8a5c" stroke-width="1.2" fill="none" opacity="0.61"/><path d="M1451 604 q-1 -24 -2 -47" stroke="#b7a066" stroke-width="1.2" fill="none" opacity="0.55"/><path d="M1162 636 q-4 -11 -7 -22" stroke="#8f8a5c" stroke-width="1.4" fill="none" opacity="0.68"/><path d="M1368 614 q4 -22 8 -45" stroke="#8f8a5c" stroke-width="1.4" fill="none" opacity="0.75"/><path d="M1235 630 q0 -17 0 -33" stroke="#b7a066" stroke-width="1.1" fill="none" opacity="0.67"/><path d="M1109 653 q1 -21 2 -41" stroke="#8f8a5c" stroke-width="1.1" fill="none" opacity="0.48"/><path d="M45 831 q2 -22 3 -43" stroke="#a8935c" stroke-width="1.4" fill="none" opacity="0.63"/><path d="M351 783 q-1 -27 -1 -55" stroke="#9d8a55" stroke-width="0.9" fill="none" opacity="0.73"/><path d="M1340 613 q3 -23 5 -46" stroke="#8f8a5c" stroke-width="1.4" fill="none" opacity="0.75"/><path d="M297 791 q0 -12 1 -24" stroke="#9d8a55" stroke-width="1.6" fill="none" opacity="0.76"/><path d="M745 707 q-0 -12 -0 -23" stroke="#8f8a5c" stroke-width="1.1" fill="none" opacity="0.68"/><path d="M783 701 q4 -25 8 -49" stroke="#cdb985" stroke-width="1.1" fill="none" opacity="0.71"/><path d="M914 677 q0 -27 1 -53" stroke="#b7a066" stroke-width="1.3" fill="none" opacity="0.56"/><path d="M882 675 q-3 -9 -5 -18" stroke="#c2ad74" stroke-width="1.5" fill="none" opacity="0.42"/><path d="M1298 625 q-4 -14 -9 -29" stroke="#b7a066" stroke-width="0.9" fill="none" opacity="0.37"/><path d="M1139 641 q0 -18 1 -37" stroke="#9d8a55" stroke-width="0.9" fill="none" opacity="0.63"/><path d="M-2 829 q-3 -25 -6 -50" stroke="#b7a066" stroke-width="1.1" fill="none" opacity="0.58"/><path d="M404 771 q3 -12 5 -23" stroke="#c2ad74" stroke-width="1.4" fill="none" opacity="0.65"/><path d="M952 666 q5 -10 10 -20" stroke="#cdb985" stroke-width="1.4" fill="none" opacity="0.38"/><path d="M97 822 q2 -10 5 -20" stroke="#c2ad74" stroke-width="1.5" fill="none" opacity="0.38"/><path d="M987 669 q2 -26 5 -52" stroke="#8f8a5c" stroke-width="1.1" fill="none" opacity="0.67"/><path d="M1267 633 q-4 -11 -7 -22" stroke="#a8935c" stroke-width="1.2" fill="none" opacity="0.63"/><path d="M1434 607 q4 -18 9 -36" stroke="#8f8a5c" stroke-width="1.3" fill="none" opacity="0.46"/><path d="M411 765 q1 -17 1 -34" stroke="#cdb985" stroke-width="1.5" fill="none" opacity="0.48"/><path d="M1256 625 q4 -25 9 -49" stroke="#a8935c" stroke-width="1.1" fill="none" opacity="0.66"/><path d="M838 690 q-3 -21 -6 -43" stroke="#b7a066" stroke-width="0.9" fill="none" opacity="0.59"/><path d="M468 755 q-4 -18 -8 -36" stroke="#9d8a55" stroke-width="1.0" fill="none" opacity="0.35"/><path d="M297 797 q-2 -11 -5 -23" stroke="#8f8a5c" stroke-width="1.5" fill="none" opacity="0.47"/><path d="M-0 832 q-3 -21 -7 -42" stroke="#8f8a5c" stroke-width="1.4" fill="none" opacity="0.62"/><path d="M1474 604 q-0 -26 -0 -52" stroke="#a8935c" stroke-width="1.4" fill="none" opacity="0.42"/><path d="M511 746 q2 -13 5 -26" stroke="#8f8a5c" stroke-width="1.1" fill="none" opacity="0.77"/><path d="M941 674 q-1 -21 -1 -41" stroke="#cdb985" stroke-width="1.1" fill="none" opacity="0.55"/><path d="M1415 612 q3 -24 6 -48" stroke="#8f8a5c" stroke-width="0.9" fill="none" opacity="0.47"/><path d="M1097 647 q5 -18 9 -36" stroke="#9d8a55" stroke-width="1.2" fill="none" opacity="0.58"/><path d="M1495 593 q0 -16 1 -33" stroke="#9d8a55" stroke-width="0.8" fill="none" opacity="0.49"/><path d="M588 741 q-0 -23 -0 -45" stroke="#b7a066" stroke-width="1.3" fill="none" opacity="0.49"/><path d="M612 728 q2 -18 3 -37" stroke="#c2ad74" stroke-width="1.1" fill="none" opacity="0.52"/><path d="M313 792 q1 -24 1 -47" stroke="#9d8a55" stroke-width="1.5" fill="none" opacity="0.44"/><path d="M43 827 q3 -14 6 -28" stroke="#b7a066" stroke-width="0.8" fill="none" opacity="0.41"/><path d="M1129 644 q-2 -16 -3 -33" stroke="#c2ad74" stroke-width="0.8" fill="none" opacity="0.53"/><path d="M1141 639 q-2 -17 -5 -34" stroke="#a8935c" stroke-width="1.5" fill="none" opacity="0.67"/><path d="M684 716 q-4 -25 -8 -50" stroke="#a8935c" stroke-width="1.3" fill="none" opacity="0.42"/><path d="M792 700 q2 -10 3 -21" stroke="#9d8a55" stroke-width="1.3" fill="none" opacity="0.37"/><path d="M427 771 q-5 -29 -10 -57" stroke="#8f8a5c" stroke-width="0.9" fill="none" opacity="0.47"/><path d="M1287 631 q4 -11 8 -22" stroke="#c2ad74" stroke-width="1.5" fill="none" opacity="0.60"/><path d="M1270 632 q-2 -22 -5 -43" stroke="#cdb985" stroke-width="1.5" fill="none" opacity="0.75"/><path d="M675 724 q-2 -26 -5 -53" stroke="#c2ad74" stroke-width="0.8" fill="none" opacity="0.52"/><path d="M942 669 q-4 -14 -8 -29" stroke="#9d8a55" stroke-width="1.2" fill="none" opacity="0.40"/><path d="M927 671 q5 -24 9 -47" stroke="#8f8a5c" stroke-width="1.2" fill="none" opacity="0.70"/><path d="M689 721 q4 -12 7 -25" stroke="#9d8a55" stroke-width="1.5" fill="none" opacity="0.43"/><path d="M1355 620 q2 -10 4 -21" stroke="#9d8a55" stroke-width="1.5" fill="none" opacity="0.64"/><path d="M1079 650 q2 -22 4 -45" stroke="#8f8a5c" stroke-width="1.2" fill="none" opacity="0.47"/><path d="M807 689 q-0 -25 -1 -49" stroke="#9d8a55" stroke-width="1.1" fill="none" opacity="0.73"/><path d="M334 788 q5 -21 10 -42" stroke="#8f8a5c" stroke-width="1.0" fill="none" opacity="0.73"/><path d="M639 722 q-3 -23 -6 -46" stroke="#8f8a5c" stroke-width="1.4" fill="none" opacity="0.75"/><path d="M1159 646 q4 -14 9 -28" stroke="#a8935c" stroke-width="1.3" fill="none" opacity="0.57"/><path d="M914 669 q-5 -28 -10 -56" stroke="#c2ad74" stroke-width="1.1" fill="none" opacity="0.53"/><path d="M1461 598 q-0 -19 -1 -38" stroke="#a8935c" stroke-width="1.4" fill="none" opacity="0.67"/><path d="M124 816 q4 -11 8 -22" stroke="#cdb985" stroke-width="1.3" fill="none" opacity="0.55"/><path d="M746 701 q-1 -22 -2 -44" stroke="#a8935c" stroke-width="1.6" fill="none" opacity="0.73"/><path d="M714 715 q3 -23 7 -46" stroke="#a8935c" stroke-width="1.0" fill="none" opacity="0.77"/><path d="M1543 591 q-4 -22 -7 -43" stroke="#b7a066" stroke-width="1.5" fill="none" opacity="0.49"/><path d="M1232 633 q0 -16 0 -31" stroke="#a8935c" stroke-width="1.4" fill="none" opacity="0.76"/><path d="M1430 612 q-5 -26 -9 -52" stroke="#9d8a55" stroke-width="0.9" fill="none" opacity="0.80"/><path d="M142 811 q1 -25 3 -51" stroke="#9d8a55" stroke-width="1.4" fill="none" opacity="0.38"/><path d="M1273 622 q-4 -12 -7 -23" stroke="#b7a066" stroke-width="1.0" fill="none" opacity="0.43"/><path d="M1370 610 q-2 -26 -4 -53" stroke="#c2ad74" stroke-width="0.9" fill="none" opacity="0.56"/><path d="M1390 613 q1 -29 2 -57" stroke="#cdb985" stroke-width="0.8" fill="none" opacity="0.64"/><path d="M-3 839 q3 -22 6 -45" stroke="#9d8a55" stroke-width="1.4" fill="none" opacity="0.51"/><path d="M1000 657 q4 -20 9 -40" stroke="#9d8a55" stroke-width="1.3" fill="none" opacity="0.55"/><path d="M744 705 q4 -18 7 -37" stroke="#cdb985" stroke-width="1.3" fill="none" opacity="0.57"/><path d="M799 698 q-1 -21 -2 -41" stroke="#c2ad74" stroke-width="1.3" fill="none" opacity="0.80"/><path d="M755 698 q-1 -12 -2 -24" stroke="#9d8a55" stroke-width="1.1" fill="none" opacity="0.54"/><path d="M1359 620 q-3 -14 -5 -28" stroke="#cdb985" stroke-width="0.9" fill="none" opacity="0.61"/><path d="M1339 621 q2 -23 3 -47" stroke="#cdb985" stroke-width="1.2" fill="none" opacity="0.38"/><path d="M216 805 q-3 -14 -5 -27" stroke="#9d8a55" stroke-width="1.4" fill="none" opacity="0.80"/><path d="M254 794 q2 -12 4 -23" stroke="#a8935c" stroke-width="1.4" fill="none" opacity="0.48"/><path d="M868 686 q5 -26 9 -53" stroke="#b7a066" stroke-width="1.6" fill="none" opacity="0.54"/><path d="M1325 621 q5 -27 10 -55" stroke="#a8935c" stroke-width="1.2" fill="none" opacity="0.38"/><path d="M970 670 q4 -19 8 -37" stroke="#c2ad74" stroke-width="1.6" fill="none" opacity="0.69"/><path d="M415 774 q1 -13 1 -27" stroke="#8f8a5c" stroke-width="0.9" fill="none" opacity="0.50"/><path d="M565 738 q5 -14 9 -28" stroke="#8f8a5c" stroke-width="0.9" fill="none" opacity="0.36"/><path d="M980 666 q1 -20 2 -39" stroke="#c2ad74" stroke-width="1.4" fill="none" opacity="0.56"/><path d="M804 689 q-3 -21 -5 -43" stroke="#a8935c" stroke-width="0.9" fill="none" opacity="0.79"/><path d="M655 719 q-0 -12 -1 -25" stroke="#c2ad74" stroke-width="1.4" fill="none" opacity="0.41"/><path d="M1306 629 q-3 -24 -6 -48" stroke="#cdb985" stroke-width="1.1" fill="none" opacity="0.64"/><path d="M1483 594 q-3 -17 -6 -33" stroke="#8f8a5c" stroke-width="1.1" fill="none" opacity="0.49"/><path d="M1496 596 q-4 -26 -8 -53" stroke="#b7a066" stroke-width="1.1" fill="none" opacity="0.47"/><path d="M1118 643 q-4 -15 -9 -31" stroke="#c2ad74" stroke-width="1.5" fill="none" opacity="0.61"/><path d="M784 701 q3 -28 7 -56" stroke="#8f8a5c" stroke-width="1.1" fill="none" opacity="0.64"/><path d="M1514 592 q2 -28 5 -56" stroke="#cdb985" stroke-width="1.3" fill="none" opacity="0.48"/><path d="M748 700 q1 -17 2 -34" stroke="#cdb985" stroke-width="1.6" fill="none" opacity="0.64"/><path d="M30 834 q-0 -9 -0 -19" stroke="#c2ad74" stroke-width="0.9" fill="none" opacity="0.50"/><path d="M936 668 q0 -16 1 -32" stroke="#a8935c" stroke-width="1.1" fill="none" opacity="0.71"/><path d="M213 801 q2 -20 4 -40" stroke="#b7a066" stroke-width="1.3" fill="none" opacity="0.41"/><path d="M1146 639 q-5 -25 -10 -51" stroke="#b7a066" stroke-width="1.5" fill="none" opacity="0.58"/><path d="M650 726 q4 -12 7 -23" stroke="#8f8a5c" stroke-width="1.4" fill="none" opacity="0.39"/><path d="M568 745 q1 -23 1 -46" stroke="#8f8a5c" stroke-width="1.2" fill="none" opacity="0.36"/><path d="M441 764 q4 -19 7 -38" stroke="#9d8a55" stroke-width="1.3" fill="none" opacity="0.66"/><path d="M722 704 q3 -13 6 -27" stroke="#c2ad74" stroke-width="1.6" fill="none" opacity="0.69"/><path d="M871 677 q4 -25 7 -49" stroke="#c2ad74" stroke-width="1.2" fill="none" opacity="0.46"/><path d="M891 681 q-1 -12 -1 -24" stroke="#9d8a55" stroke-width="1.2" fill="none" opacity="0.65"/><path d="M989 668 q0 -27 1 -53" stroke="#b7a066" stroke-width="1.2" fill="none" opacity="0.50"/><path d="M1186 643 q-3 -12 -6 -23" stroke="#b7a066" stroke-width="1.1" fill="none" opacity="0.53"/><path d="M1159 647 q-4 -15 -8 -29" stroke="#c2ad74" stroke-width="1.3" fill="none" opacity="0.55"/><path d="M-6 837 q-0 -24 -0 -49" stroke="#cdb985" stroke-width="1.1" fill="none" opacity="0.61"/><path d="M1509 599 q3 -27 6 -54" stroke="#a8935c" stroke-width="1.4" fill="none" opacity="0.66"/><path d="M776 702 q4 -28 9 -56" stroke="#9d8a55" stroke-width="1.2" fill="none" opacity="0.65"/><path d="M641 725 q2 -28 3 -56" stroke="#a8935c" stroke-width="0.9" fill="none" opacity="0.65"/><path d="M689 715 q2 -28 4 -57" stroke="#c2ad74" stroke-width="1.2" fill="none" opacity="0.37"/><path d="M4 837 q0 -26 1 -52" stroke="#cdb985" stroke-width="1.0" fill="none" opacity="0.69"/><path d="M1044 661 q0 -29 1 -58" stroke="#9d8a55" stroke-width="1.6" fill="none" opacity="0.41"/><path d="M-5 832 q3 -12 6 -24" stroke="#b7a066" stroke-width="1.1" fill="none" opacity="0.61"/><path d="M71 823 q-2 -10 -4 -20" stroke="#9d8a55" stroke-width="1.6" fill="none" opacity="0.48"/><path d="M858 690 q-5 -11 -10 -23" stroke="#a8935c" stroke-width="1.3" fill="none" opacity="0.46"/><path d="M320 789 q-4 -25 -9 -50" stroke="#c2ad74" stroke-width="1.0" fill="none" opacity="0.48"/><path d="M75 824 q-3 -20 -6 -40" stroke="#9d8a55" stroke-width="0.8" fill="none" opacity="0.45"/><path d="M52 824 q-5 -20 -9 -41" stroke="#a8935c" stroke-width="1.1" fill="none" opacity="0.69"/><path d="M900 675 q5 -23 9 -45" stroke="#8f8a5c" stroke-width="1.0" fill="none" opacity="0.75"/><path d="M280 793 q-3 -22 -6 -44" stroke="#a8935c" stroke-width="1.5" fill="none" opacity="0.58"/><path d="M526 753 q-3 -25 -5 -50" stroke="#b7a066" stroke-width="1.3" fill="none" opacity="0.37"/><path d="M1207 638 q-1 -15 -3 -30" stroke="#a8935c" stroke-width="1.2" fill="none" opacity="0.64"/><path d="M1447 601 q3 -10 6 -19" stroke="#a8935c" stroke-width="1.4" fill="none" opacity="0.77"/><path d="M1005 667 q-2 -15 -4 -31" stroke="#b7a066" stroke-width="1.4" fill="none" opacity="0.65"/><path d="M1105 647 q3 -11 5 -23" stroke="#b7a066" stroke-width="1.1" fill="none" opacity="0.59"/><path d="M1309 619 q1 -13 2 -26" stroke="#8f8a5c" stroke-width="1.3" fill="none" opacity="0.73"/><path d="M482 756 q1 -17 3 -35" stroke="#8f8a5c" stroke-width="1.2" fill="none" opacity="0.52"/><path d="M1466 599 q4 -12 7 -23" stroke="#8f8a5c" stroke-width="1.2" fill="none" opacity="0.57"/><path d="M1364 616 q-1 -18 -1 -36" stroke="#a8935c" stroke-width="0.9" fill="none" opacity="0.44"/><path d="M1044 661 q0 -13 0 -25" stroke="#9d8a55" stroke-width="1.1" fill="none" opacity="0.41"/><path d="M1347 624 q-3 -15 -6 -31" stroke="#cdb985" stroke-width="1.3" fill="none" opacity="0.48"/><path d="M1433 604 q1 -15 1 -30" stroke="#b7a066" stroke-width="1.0" fill="none" opacity="0.65"/><path d="M350 780 q-4 -27 -7 -54" stroke="#c2ad74" stroke-width="0.9" fill="none" opacity="0.72"/><path d="M268 795 q4 -13 8 -25" stroke="#b7a066" stroke-width="1.1" fill="none" opacity="0.75"/><path d="M1318 627 q3 -24 7 -49" stroke="#cdb985" stroke-width="1.1" fill="none" opacity="0.45"/><path d="M231 808 q-4 -16 -8 -33" stroke="#c2ad74" stroke-width="0.8" fill="none" opacity="0.72"/><path d="M1277 629 q3 -10 6 -21" stroke="#8f8a5c" stroke-width="1.3" fill="none" opacity="0.37"/><path d="M1019 657 q1 -11 2 -22" stroke="#c2ad74" stroke-width="0.9" fill="none" opacity="0.54"/><path d="M1388 612 q-0 -24 -0 -48" stroke="#9d8a55" stroke-width="1.3" fill="none" opacity="0.45"/><path d="M614 728 q0 -25 1 -51" stroke="#c2ad74" stroke-width="0.9" fill="none" opacity="0.80"/><path d="M1370 612 q3 -12 6 -24" stroke="#b7a066" stroke-width="0.9" fill="none" opacity="0.70"/><path d="M204 808 q-2 -19 -4 -38" stroke="#8f8a5c" stroke-width="1.2" fill="none" opacity="0.49"/><path d="M494 751 q4 -16 9 -33" stroke="#b7a066" stroke-width="0.9" fill="none" opacity="0.55"/><path d="M324 786 q4 -12 9 -25" stroke="#cdb985" stroke-width="1.6" fill="none" opacity="0.73"/><path d="M1142 645 q-3 -28 -5 -55" stroke="#c2ad74" stroke-width="0.9" fill="none" opacity="0.36"/><path d="M1232 631 q4 -29 9 -57" stroke="#9d8a55" stroke-width="1.6" fill="none" opacity="0.73"/><path d="M8 829 q-2 -26 -3 -53" stroke="#9d8a55" stroke-width="1.1" fill="none" opacity="0.54"/><path d="M994 666 q1 -8 3 -17" stroke="#a8935c" stroke-width="1.4" fill="none" opacity=".85"/><path d="M1055 668 q-3 -14 -6 -27" stroke="#c2ad74" stroke-width="1.4" fill="none" opacity=".85"/><path d="M1090 671 q1 -9 2 -19" stroke="#b7a066" stroke-width="1.4" fill="none" opacity=".85"/><path d="M1070 672 q-3 -9 -5 -18" stroke="#b7a066" stroke-width="1.4" fill="none" opacity=".85"/><path d="M987 673 q-1 -14 -3 -27" stroke="#a8935c" stroke-width="1.4" fill="none" opacity=".85"/><path d="M1058 667 q2 -7 4 -15" stroke="#b7a066" stroke-width="1.4" fill="none" opacity=".85"/><path d="M991 674 q3 -8 6 -16" stroke="#c2ad74" stroke-width="1.4" fill="none" opacity=".85"/><path d="M1059 671 q1 -10 2 -21" stroke="#c2ad74" stroke-width="1.4" fill="none" opacity=".85"/><path d="M990 670 q2 -14 4 -28" stroke="#b7a066" stroke-width="1.4" fill="none" opacity=".85"/><path d="M1076 673 q-1 -9 -2 -19" stroke="#9d8a55" stroke-width="1.4" fill="none" opacity=".85"/><path d="M1036 671 q2 -7 3 -15" stroke="#9d8a55" stroke-width="1.4" fill="none" opacity=".85"/><path d="M986 667 q1 -15 2 -29" stroke="#c2ad74" stroke-width="1.4" fill="none" opacity=".85"/><path d="M1011 668 q-2 -9 -5 -18" stroke="#a8935c" stroke-width="1.4" fill="none" opacity=".85"/><path d="M1027 672 q-1 -8 -2 -16" stroke="#c2ad74" stroke-width="1.4" fill="none" opacity=".85"/><path d="M1039 675 q0 -13 1 -25" stroke="#c2ad74" stroke-width="1.4" fill="none" opacity=".85"/><path d="M1039 668 q-0 -13 -1 -27" stroke="#c2ad74" stroke-width="1.4" fill="none" opacity=".85"/><path d="M991 669 q0 -9 1 -18" stroke="#9d8a55" stroke-width="1.4" fill="none" opacity=".85"/><path d="M1035 673 q-2 -9 -4 -19" stroke="#a8935c" stroke-width="1.4" fill="none" opacity=".85"/><path d="M1016 672 q-3 -9 -5 -18" stroke="#b7a066" stroke-width="1.4" fill="none" opacity=".85"/><path d="M998 675 q-2 -11 -5 -23" stroke="#c2ad74" stroke-width="1.4" fill="none" opacity=".85"/><path d="M1094 674 q1 -13 3 -25" stroke="#a8935c" stroke-width="1.4" fill="none" opacity=".85"/><path d="M1009 671 q-2 -13 -4 -26" stroke="#a8935c" stroke-width="1.4" fill="none" opacity=".85"/><path d="M1005 665 q1 -8 2 -16" stroke="#a8935c" stroke-width="1.4" fill="none" opacity=".85"/><path d="M1026 671 q-3 -9 -5 -18" stroke="#a8935c" stroke-width="1.4" fill="none" opacity=".85"/><path d="M1010 668 q2 -12 3 -23" stroke="#9d8a55" stroke-width="1.4" fill="none" opacity=".85"/><path d="M993 669 q2 -13 5 -26" stroke="#b7a066" stroke-width="1.4" fill="none" opacity=".85"/><path d="M1047 668 q1 -11 3 -22" stroke="#b7a066" stroke-width="1.4" fill="none" opacity=".85"/><path d="M1003 670 q0 -10 0 -21" stroke="#9d8a55" stroke-width="1.4" fill="none" opacity=".85"/><path d="M1026 664 q1 -11 2 -22" stroke="#c2ad74" stroke-width="1.4" fill="none" opacity=".85"/><path d="M1053 668 q0 -8 1 -16" stroke="#b7a066" stroke-width="1.4" fill="none" opacity=".85"/><path d="M1062 675 q-1 -15 -2 -30" stroke="#c2ad74" stroke-width="1.4" fill="none" opacity=".85"/><path d="M1049 664 q-3 -13 -5 -26" stroke="#c2ad74" stroke-width="1.4" fill="none" opacity=".85"/><path d="M1024 674 q-2 -8 -5 -16" stroke="#c2ad74" stroke-width="1.4" fill="none" opacity=".85"/><path d="M1005 671 q1 -8 2 -16" stroke="#9d8a55" stroke-width="1.4" fill="none" opacity=".85"/><path d="M1053 672 q-1 -12 -1 -24" stroke="#b7a066" stroke-width="1.4" fill="none" opacity=".85"/><path d="M988 676 q1 -13 3 -27" stroke="#b7a066" stroke-width="1.4" fill="none" opacity=".85"/><path d="M992 666 q-1 -12 -2 -24" stroke="#b7a066" stroke-width="1.4" fill="none" opacity=".85"/><path d="M1030 665 q2 -12 4 -24" stroke="#c2ad74" stroke-width="1.4" fill="none" opacity=".85"/><path d="M989 675 q-2 -13 -5 -25" stroke="#b7a066" stroke-width="1.4" fill="none" opacity=".85"/><path d="M1046 673 q-3 -15 -6 -30" stroke="#c2ad74" stroke-width="1.4" fill="none" opacity=".85"/></g>
</svg>
</div>
<div class="a" style="left:19px;top:1524px;width:1544px;height:30px;background:#1c1c1c"></div>
<div class="a" style="left:19px;top:1554px;width:1544px;height:1px;background:#0a0a0a"></div>
<div class="a" style="left:19px;top:1555px;width:1544px;height:60px;background:#1d1d1d"></div>
<div class="a" style="left:27px;top:1537px;width:272px;height:3px;background:#e8cb00;border-radius:1.500px"></div>
<div class="a" style="left:299px;top:1537px;width:1102px;height:3px;background:#3c3c3c"></div>
<div class="a" style="left:293px;top:1532px;width:13px;height:13px;border-radius:50%;background:#e9e9e9"></div>
<svg class="a" style="left:1414px;top:1528px" width="24" height="20" viewBox="1414 1528 24 20"><path d="M1417 1534.600h3.600l5.400-4.200v15.800l-5.400-4.200h-3.600z" fill="#7a7a7a"/><path d="M1430 1533.600v9.400" stroke="#7a7a7a" stroke-width="1.300"/><path d="M1434.400 1532.200v12.400" stroke="#555" stroke-width="1.300"/></svg>
<div class="a" style="left:1443px;top:1536.5px;width:106px;height:3.5px;background:#000;border-radius:1.500px"></div>
<div class="a" style="left:1443px;top:1536.5px;width:30px;height:3.5px;background:#e8cb00;border-radius:1.500px"></div>
<div class="a" style="left:1466.500px;top:1532px;width:12.500px;height:12.500px;border-radius:50%;background:#e9e9e9"></div>
<div class="a" style="left:80px;top:1555px;width:1px;height:60px;background:#0b0b0b"></div>
<div class="a" style="left:81px;top:1555px;width:1px;height:60px;background:#262626"></div>
<div class="a" style="left:142px;top:1555px;width:1px;height:60px;background:#0b0b0b"></div>
<div class="a" style="left:143px;top:1555px;width:1px;height:60px;background:#262626"></div>
<div class="a" style="left:204px;top:1555px;width:1px;height:60px;background:#0b0b0b"></div>
<div class="a" style="left:205px;top:1555px;width:1px;height:60px;background:#262626"></div>
<div class="a" style="left:266px;top:1555px;width:1px;height:60px;background:#0b0b0b"></div>
<div class="a" style="left:267px;top:1555px;width:1px;height:60px;background:#262626"></div>
<div class="a" style="left:328px;top:1555px;width:1px;height:60px;background:#0b0b0b"></div>
<div class="a" style="left:329px;top:1555px;width:1px;height:60px;background:#262626"></div>
<svg class="a" style="left:19px;top:1555px" width="320" height="60" viewBox="19 1555 320 60"><g fill="#e4e4e4">
<path d="M44.600 1576.800L57.600 1585 44.600 1593.200Z" stroke="#e4e4e4" stroke-width="1" stroke-linejoin="round"/>
<rect x="105" y="1579" width="13" height="12.600" rx=".6"/>
<rect x="166.600" y="1578.600" width="3.200" height="13.200"/><path d="M180.200 1578.600v13.200l-9.800-6.600z"/>
<rect x="238.400" y="1578.600" width="3.200" height="13.200"/><path d="M228 1578.600v13.200l9.800-6.600z"/>
<path d="M297.200 1578.800l6.600 7.400h-13.200z"/><rect x="290.800" y="1588.400" width="12.800" height="2.800"/>
</g></svg>
<span class="t" style="left:344.20px;top:1578.22px;font-size:18.4px;color:#f4f4f4;transform:scaleX(0.9203);">00:00:38</span>
<span class="t" style="left:417.80px;top:1578.22px;font-size:18.4px;color:#7d7d7d;transform:scaleX(1.0667);">/</span>
<span class="t" style="left:432.60px;top:1578.22px;font-size:18.4px;color:#777;transform:scaleX(0.9063);">00:03:15</span>
<div class="a" style="left:506px;top:1576px;width:43px;height:21px;background:#333;border-radius:4px"></div>
<span class="t" style="left:514.20px;top:1578.36px;font-size:18px;color:#8a8a8a;transform:scaleX(0.8353);">S/W</span>
<div class="a" style="left:559px;top:1576px;width:54px;height:21px;background:#262626;border-radius:4px"></div>
<span class="t" style="left:568.00px;top:1578.36px;font-size:18px;color:#727272;transform:scaleX(0.8702);">AV01</span>
<div class="a" style="left:623px;top:1576px;width:46.39999999999998px;height:21px;background:#262626;border-radius:4px"></div>
<span class="t" style="left:631.70px;top:1578.36px;font-size:18px;color:#727272;transform:scaleX(0.8459);">AAC</span>
<div class="a" style="left:679px;top:1576px;width:37px;height:21px;background:#303030;border-radius:4px"></div>
<span class="t" style="left:687.60px;top:1578.36px;font-size:18px;color:#727272;transform:scaleX(0.8880);">2.0</span>
<svg class="a" style="left:1320px;top:1568px" width="236" height="34" viewBox="1320 1568 236 34">
<g fill="none" stroke="#5c5c5c" stroke-width="1.400"><path d="M1326.600 1589.600q6 4.200 13.600 4.600"/><path d="M1346.600 1594q6.400-.8 11-4.400"/></g>
<path d="M1337.400 1590.400l4.200 3.800-4.600 3z" fill="#5c5c5c"/>
<circle cx="1357" cy="1574.600" r="1" fill="#5c5c5c"/>
<path d="M1377.600 1593.600h20.800" stroke="#666" stroke-width="1.200"/>
<g stroke="#f0d800" fill="none"><path d="M1422.600 1575.400h18" stroke-width="1.300"/><path d="M1422.600 1580.400h7.400M1422.600 1585.400h7.400M1422.600 1590.200h7.400" stroke-width="1.300"/>
<circle cx="1439.300" cy="1585.800" r="5.200" stroke-width="3"/><path d="M1443.200 1589.600l5 5" stroke-width="3" stroke-linecap="round"/></g>
<rect x="1473" y="1575" width="19" height="20.600" rx="2.200" fill="#6e6e6e"/><path d="M1477 1581h11M1477 1585.300h11M1477 1589.600h11" stroke="#1d1d1d" stroke-width="2.100"/>
<g transform="translate(1529.700 1584.600)"><circle r="6.200" fill="none" stroke="#6e6e6e" stroke-width="4.400"/><g stroke="#6e6e6e" stroke-width="4.400"><path d="M0-11.200V-6M0 11.200V6M-11.200 0H-6M11.200 0H6M-7.900-7.900L-4.300-4.300M7.900 7.900L4.300 4.300M-7.900 7.900L-4.300 4.300M7.900-7.900L4.300-4.300"/></g></g>
</svg>
<span class="t" style="left:1328.40px;top:1573.79px;font-size:15.6px;color:#5c5c5c;font-weight:bold;transform:scaleX(0.9308);">360</span>
<span class="t" style="left:1377.60px;top:1572.34px;font-size:19.2px;color:#666;font-weight:bold;transform:scaleX(0.8327);">3D</span>
<div class="a" style="left:34px;top:564px;width:718px;height:966px;background:#000;box-shadow:1px 1px 5px 1px rgba(0,0,0,.55)"></div>
<div class="a" style="left:39px;top:568px;width:708px;height:47px;background:#1e1e1e"></div>
<span class="t" style="left:49.40px;top:582.09px;font-size:18.2px;color:#e2e6f2;font-weight:bold;transform:scaleX(0.9822);">Информация о воспроизведении</span>
<svg class="a" style="left:672px;top:576px" width="60" height="26" viewBox="672 576 60 26">
<g fill="#7c7c7c"><rect x="675.200" y="587.800" width="6" height="1.800"/><rect x="681" y="581" width="2" height="15.600"/><path d="M683 584.400l2.600-1.800h6v-1.800h1.800v15.800h-1.800v-1.800h-6l-2.600-1.800z"/></g>
<path d="M712.600 582l14.600 13.800M727.200 582l-14.600 13.800" stroke="#8c8c8c" stroke-width="2.200" fill="none"/></svg>
<div class="a" style="left:39px;top:615px;width:708px;height:910px;background:#fff"></div>
<div class="a" style="left:39px;top:615px;width:708px;height:38.6px;background:linear-gradient(#ffffff,#fbfbff 40%,#eceefc)"></div>
<div class="a" style="left:131px;top:652.6px;width:616px;height:1px;background:#a3a9dc"></div>
<div class="a" style="left:39px;top:615px;width:92px;height:40px;background:#fff"></div>
<div class="a" style="left:131px;top:615px;width:1px;height:38.6px;background:#9aa1d8"></div>
<div class="a" style="left:235.5px;top:615px;width:1px;height:38.6px;background:#9aa1d8"></div>
<div class="a" style="left:312px;top:615px;width:1px;height:38.6px;background:#9aa1d8"></div>
<div class="a" style="left:415px;top:615px;width:1px;height:38.6px;background:#9aa1d8"></div>
<span class="t" style="left:57.80px;top:628.49px;font-size:18.2px;color:#4b5392;transform:scaleX(0.9345);">Общее</span>
<span class="t" style="left:149.60px;top:626.89px;font-size:18.2px;color:#333;transform:scaleX(0.9338);">Ресурсы</span>
<span class="t" style="left:253.60px;top:626.89px;font-size:18.2px;color:#333;transform:scaleX(0.8939);">Файл</span>
<span class="t" style="left:330.40px;top:626.89px;font-size:18.2px;color:#333;transform:scaleX(0.8980);">Система</span>
<div class="a" style="left:730px;top:654px;width:17px;height:823px;background:#f4f4f4"></div>
<div class="a" style="left:730px;top:671px;width:17px;height:534px;background:#fff;border:1px solid #e6e6e6"></div>
<div class="a" style="left:730.5px;top:654.5px;width:16px;height:16.5px;background:#fff;border:1px solid #e6e6e6;border-radius:2px"></div>
<div class="a" style="left:730.5px;top:1460.5px;width:16px;height:16px;background:#fff;border:1px solid #e6e6e6;border-radius:2px"></div>
<svg class="a" style="left:730px;top:654px" width="17" height="823" viewBox="730 654 17 823"><g fill="#a8a8a8"><path d="M738.600 659.400l2.800 3.400h-5.600zM734.600 662.800h8v1.400h-8z"/><path d="M738.600 1471.400l2.800-3.400h-5.600zM734.600 1466.600h8v1.400h-8z"/><rect x="735" y="935" width="7" height="1"/><rect x="735" y="937.200" width="7" height="1"/><rect x="735" y="939.400" width="7" height="1"/></g></svg>
<div class="a" style="left:57px;top:685.5px;width:643px;height:267px;border:1px solid #dcdcdc;background:#fff"></div>
<div class="a" style="left:57px;top:975.3px;width:643px;height:186px;border:1px solid #dcdcdc;background:#fff"></div>
<div class="a" style="left:57px;top:1185.5px;width:643px;height:230px;border:1px solid #dcdcdc;background:#fff"></div>
<div class="a" style="left:57px;top:1435.2px;width:643px;height:60px;border:1px solid #dcdcdc;background:#fff"></div>
<div class="a" style="left:63.599999999999994px;top:678.6px;width:184.8px;height:18px;background:#fff"></div><span class="t" style="left:66.60px;top:678.09px;font-size:18.2px;color:#000;transform:scaleX(0.9811);">Информация о видео</span>
<div class="a" style="left:63.7px;top:968.2px;width:179.8px;height:18px;background:#fff"></div><span class="t" style="left:66.70px;top:967.69px;font-size:18.2px;color:#000;transform:scaleX(0.9833);">Информация о звуке</span>
<div class="a" style="left:63.7px;top:1178.2px;width:98.8px;height:18px;background:#fff"></div><span class="t" style="left:66.70px;top:1177.69px;font-size:18.2px;color:#000;transform:scaleX(0.9820);">Подробнее</span>
<div class="a" style="left:63.400000000000006px;top:1429px;width:201.99999999999997px;height:18px;background:#fff"></div><span class="t" style="left:66.40px;top:1428.49px;font-size:18.2px;color:#000;transform:scaleX(0.9812);">Уровень звука на входе</span>
<div class="a" style="left:184.5px;top:701.4px;width:501.2px;height:37.2px;border:1px solid #919191;border-radius:3px;background:linear-gradient(#ffffff,#f8f8f8 45%,#efefef)"></div>
<div class="a" style="left:184.5px;top:988.7px;width:501.2px;height:37px;border:1px solid #919191;border-radius:3px;background:linear-gradient(#ffffff,#f8f8f8 45%,#efefef)"></div>
<span class="t" style="left:313.20px;top:711.89px;font-size:18.2px;color:#333;transform:scaleX(0.9764);">Built-in Video Codec/Transform</span>
<span class="t" style="left:312.20px;top:999.49px;font-size:18.2px;color:#333;transform:scaleX(0.9863);">Built-in Audio Codec/Transform</span>
<span class="t" style="left:102.60px;top:712.29px;font-size:18.2px;color:#000;transform:scaleX(0.9757);">Декодер:</span>
<span class="t" style="left:124.40px;top:759.29px;font-size:18.2px;color:#000;transform:scaleX(0.9741);">Кодек:</span><span class="t" style="left:182.60px;top:759.29px;font-size:18.2px;color:#000;transform:scaleX(0.9767);">AV01 - Встроенный декодер FFmpeg(libdav1d)</span>
<span class="t" style="left:109.50px;top:797.09px;font-size:18.2px;color:#000;transform:scaleX(0.9677);">Формат:</span><span class="t" style="left:182.60px;top:797.09px;font-size:18.2px;color:#000;transform:scaleX(0.9633);">AV01(24 bits)</span>
<span class="t" style="left:120.00px;top:836.89px;font-size:18.2px;color:#000;transform:scaleX(0.9500);">Вывод:</span><span class="t" style="left:182.60px;top:836.89px;font-size:18.2px;color:#000;transform:scaleX(0.9636);">NV12(12 bits)</span>
<span class="t" style="left:120.60px;top:877.89px;font-size:18.2px;color:#000;transform:scaleX(0.9479);">Кадры:</span><span class="t" style="left:182.60px;top:877.89px;font-size:18.2px;color:#000;transform:scaleX(0.9319);">29.97</span>
<span class="t" style="left:109.50px;top:915.39px;font-size:18.2px;color:#000;transform:scaleX(0.9091);">Битрейт:</span><span class="t" style="left:182.60px;top:915.39px;font-size:18.2px;color:#000;transform:scaleX(0.9857);">4732 kbps</span>
<span class="t" style="left:399.00px;top:797.29px;font-size:18.2px;color:#000;transform:scaleX(0.9477);">Входной:</span><span class="t" style="left:477.60px;top:797.29px;font-size:18.2px;color:#000;transform:scaleX(0.9678);">3840 × 2160(1.78:1)</span>
<span class="t" style="left:385.60px;top:837.39px;font-size:18.2px;color:#000;transform:scaleX(0.9571);">Выходной:</span><span class="t" style="left:477.60px;top:837.39px;font-size:18.2px;color:#000;transform:scaleX(0.9678);">3840 × 2160(1.78:1)</span>
<span class="t" style="left:399.00px;top:878.19px;font-size:18.2px;color:#000;transform:scaleX(0.9325);">Текущие:</span><span class="t" style="left:477.60px;top:878.19px;font-size:18.2px;color:#000;transform:scaleX(0.9805);">30.068 -&gt; 29.97</span>
<span class="t" style="left:102.60px;top:999.89px;font-size:18.2px;color:#000;transform:scaleX(0.9757);">Декодер:</span>
<span class="t" style="left:124.40px;top:1042.79px;font-size:18.2px;color:#000;transform:scaleX(0.9741);">Кодек:</span><span class="t" style="left:182.60px;top:1042.79px;font-size:18.2px;color:#000;transform:scaleX(0.9462);">AAC(0xaac0) - Встроенные декодеры FFmpeg(aac)</span>
<span class="t" style="left:111.00px;top:1080.69px;font-size:18.2px;color:#000;transform:scaleX(0.9103);">Частота:</span><span class="t" style="left:182.60px;top:1080.69px;font-size:18.2px;color:#000;">44100 -&gt; 44100 в</span>
<span class="t" style="left:109.50px;top:1122.09px;font-size:18.2px;color:#000;transform:scaleX(0.9091);">Битрейт:</span><span class="t" style="left:182.60px;top:1122.09px;font-size:18.2px;color:#000;transform:scaleX(0.9869);">127.992/129.1 kbps</span>
<span class="t" style="left:443.70px;top:1081.49px;font-size:18.2px;color:#000;transform:scaleX(0.9018);">Каналы:</span><span class="t" style="left:512.30px;top:1081.49px;font-size:18.2px;color:#000;transform:scaleX(0.9897);">2 -&gt; 2 каналов</span>
<span class="t" style="left:401.70px;top:1122.49px;font-size:18.2px;color:#000;transform:scaleX(0.9345);">Разрядность:</span><span class="t" style="left:512.30px;top:1122.49px;font-size:18.2px;color:#000;transform:scaleX(0.9814);">16 -&gt; 16 бит в сек.</span>
<div class="a" style="left:69.5px;top:1204.4px;width:617px;height:193.4px;background:#fff;border:1px solid #e3e3e3;border-bottom:1.500px solid #6e6e6e"></div>
<div class="a" style="left:70.500px;top:1205.400px;width:597px;height:191px;overflow:hidden">
<span class="t" style="left:7.30px;top:6.69px;font-size:18.2px;color:#000;transform:scaleX(0.9542);">[Используемые фильтры]</span>
<span class="t" style="left:16.80px;top:31.59px;font-size:18.2px;color:#000;transform:scaleX(0.9532);">(1) Built-in MP4 Source</span>
<span class="t" style="left:16.80px;top:56.69px;font-size:18.2px;color:#000;transform:scaleX(0.9719);">(2) Built-in Video Codec/Transform</span>
<span class="t" style="left:16.80px;top:81.59px;font-size:18.2px;color:#000;transform:scaleX(0.9672);">(3) Built-in Direct3D11 Video Renderer</span>
<span class="t" style="left:16.80px;top:106.69px;font-size:18.2px;color:#000;transform:scaleX(0.9810);">(4) Built-in Audio Codec/Transform</span>
<span class="t" style="left:16.80px;top:131.49px;font-size:18.2px;color:#000;transform:scaleX(0.9680);">(5) DirectSound Audio Renderer</span>
<span class="t" style="left:7.30px;top:181.69px;font-size:18.2px;color:#000;transform:scaleX(0.9771);">[Информация о видео]</span>
</div>
<div class="a" style="left:668px;top:1205.4px;width:17px;height:191px;background:#f4f4f4"></div>
<div class="a" style="left:668.4px;top:1206.4px;width:16.4px;height:15.8px;background:#fff;border:1px solid #e6e6e6;border-radius:2px"></div>
<div class="a" style="left:668.4px;top:1223.8px;width:16.4px;height:45.6px;background:#fff;border:1px solid #e6e6e6;border-radius:2px"></div>
<div class="a" style="left:668.4px;top:1379.8px;width:16.4px;height:15.8px;background:#fff;border:1px solid #e6e6e6;border-radius:2px"></div>
<svg class="a" style="left:668px;top:1205px" width="17" height="192" viewBox="668 1205 17 192"><g fill="#a8a8a8"><path d="M676.800 1211.400l2.800 3.400h-5.600zM672.800 1214.800h8v1.400h-8z"/><path d="M676.800 1390.600l2.800-3.400h-5.600zM672.800 1385.800h8v1.400h-8z"/><rect x="673" y="1242.800" width="8" height="1"/><rect x="673" y="1245" width="8" height="1"/><rect x="673" y="1247.200" width="8" height="1"/></g></svg>
<div class="a" style="left:97px;top:1460px;width:25px;height:30px;background:#e6e6e6;border:1px solid #c9c9c9"></div>
<div class="a" style="left:174px;top:1460px;width:25px;height:30px;background:#e6e6e6;border:1px solid #c9c9c9"></div>
<div class="a" style="left:252px;top:1460px;width:25px;height:30px;background:#e6e6e6;border:1px solid #c9c9c9"></div>
<div class="a" style="left:329px;top:1460px;width:25px;height:30px;background:#e6e6e6;border:1px solid #c9c9c9"></div>
<div class="a" style="left:407px;top:1460px;width:25px;height:30px;background:#e6e6e6;border:1px solid #c9c9c9"></div>
<div class="a" style="left:484px;top:1460px;width:25px;height:30px;background:#e6e6e6;border:1px solid #c9c9c9"></div>
<div class="a" style="left:562px;top:1460px;width:25px;height:30px;background:#e6e6e6;border:1px solid #c9c9c9"></div>
<div class="a" style="left:639px;top:1457px;width:25px;height:30px;background:#e6e6e6;border:1px solid #c9c9c9"></div>
<div class="a" style="left:39px;top:1477px;width:708px;height:47.8px;background:#f6f6f6"></div>
<div class="a" style="left:39px;top:1476.5px;width:691px;height:1px;background:#e4e4e4"></div>
<div class="a" style="left:50.7px;top:1485.6px;width:215.8px;height:31.2px;border:1px solid #3c3c3c;border-radius:3px;background:linear-gradient(#ffffff,#f8f8f8 45%,#efefef)"></div>
<div class="a" style="left:53.2px;top:1488.2px;width:210.8px;height:26px;border:1px dotted #222"></div>
<span class="t" style="left:68.40px;top:1493.49px;font-size:18.2px;color:#333;transform:scaleX(0.9647);">Копировать в буфер...</span>
<div class="a" style="left:631.2px;top:1485.4px;width:103.4px;height:31.4px;border:1px solid #919191;border-radius:3px;background:linear-gradient(#ffffff,#f8f8f8 45%,#efefef)"></div>
<span class="t" style="left:649.40px;top:1493.49px;font-size:18.2px;color:#333;transform:scaleX(0.9586);">Закрыть</span>
<svg class="a" style="left:10px;top:1640px" width="290" height="32" viewBox="10 1640 290 32">
<g fill="#333" stroke="none">
<!-- broom -->
<path d="M36.400 1645.600L31.400 1654" stroke="#333" stroke-width="3.300" stroke-linecap="round" fill="none"/>
<path d="M14.800 1654.200Q25 1652.400 34 1655L31 1665.400Q20 1664.400 14.800 1654.200Z" fill="none" stroke="#333" stroke-width="2" stroke-linejoin="round"/>
<path d="M18.600 1659.800l3.200-2.600M22.400 1662.400l3.600-3.800M27 1664l2.600-3.400" stroke="#333" stroke-width="1.500" fill="none"/>
<!-- gear star -->
<g transform="translate(68.100 1654.900)"><circle r="4.700" fill="none" stroke="#333" stroke-width="3.200"/>
<g stroke="#333" stroke-width="4"><path d="M0-10.100V-5M0 10.100V5M-10.100 0H-5M10.100 0H5M-7.150-7.150L-3.600-3.600M7.150 7.150L3.600 3.600M-7.150 7.150L-3.600 3.600M7.150-7.150L3.600-3.600"/></g></g>
<!-- music -->
<path d="M106 1648.400l14.200-3.200v15.200h-2.200v-10.600l-9.800 2.200v10.600h-2.200z"/>
<ellipse cx="103.700" cy="1662.300" rx="4.500" ry="3.300" transform="rotate(-20 103.700 1662.300)"/><ellipse cx="115.900" cy="1660.100" rx="4.500" ry="3.300" transform="rotate(-20 115.900 1660.100)"/>
<!-- snail -->
<path d="M137.400 1663c.2-1.600 1.800-2 3.600-2 4 .1 8 .6 11.600-.4 4-1.100 6.200-4.400 7-8.400.4-2.200 1-4 2-5.400l-.4-2.600c-.1-.9 1.100-1.100 1.300-.2l.6 2.200c.9-.2 1.600 0 2.200.6l1.500-1.900c.6-.7 1.500 0 1 .8l-1.300 2.200c.6 1.400 0 3-1 4.600-1.800 2.900-2.400 6.200-4.800 8.700-2.300 2.400-5.300 3.200-8.800 3.200h-13c-1 0-1.600-.6-1.500-1.400z"/>
<circle cx="147.400" cy="1654.200" r="8"/>
<path d="M147.400 1655a1.400 1.400 0 1 1 1.700-1.900 3.400 3.400 0 1 0-2.300 4.900 5.400 5.400 0 1 1 5.600-4.400" fill="none" stroke="#f0f0f0" stroke-width="1.300" opacity=".75"/>
<!-- clock -->
<circle cx="193.500" cy="1654.900" r="8.400" fill="none" stroke="#333" stroke-width="3.200"/><path d="M193.500 1650V1655L196.600 1657.200" fill="none" stroke="#333" stroke-width="2.800" stroke-linecap="round"/>
<!-- binoculars -->
<g fill="#4c4c4c"><path d="M228.200 1647.100h5.600v3.800l.4.400v13.500h-8v-13.500l2-2z"/><path d="M238.300 1647.100h5.600v2.200l2 2v13.500h-8v-13.500l.4-.4z"/><rect x="233.800" y="1651.500" width="4.800" height="4.700"/></g>
<!-- question -->
<path d="M273.300 1651.200c.4-3 2.400-4.300 5-4.300 2.700 0 4.700 1.500 4.700 3.900 0 2.200-1.300 3.200-2.800 4.300-1.300 1-2.200 1.700-2.200 3.700v.6" fill="none" stroke="#333" stroke-width="4.200"/>
<rect x="275.700" y="1661.200" width="4.500" height="3.900"/>
</g>
</svg>
<svg class="a" style="left:1408px;top:1636px" width="164" height="40" viewBox="1408 1636 164 40">
<!-- mic person -->
<g fill="#fff" stroke="#000" stroke-width="2" stroke-linejoin="round"><rect x="1420" y="1639.600" width="14.600" height="17.600" rx="6.800"/>
<path d="M1413.200 1660.800c0-2.600 3-3.700 5.600-2.700l8.600 2.600 8.600-2.600c2.600-1 5.600.1 5.600 2.700 0 2.400-2.800 3.300-5.600 3.300h-3.400l6.400 5.200c-1 2.500-4.600 2.300-5.800.5l-5.800-6.200-5.800 6.200c-1.200 1.800-4.800 2-5.800-.5l6.400-5.200h-3.400c-2.800 0-5.600-.9-5.600-3.300z"/></g>
<path d="M1421.400 1645.200h11.800M1421.400 1648.600h11.800M1421.400 1652h11.800M1427.300 1641v14" stroke="#000" stroke-width="1.300"/>
<!-- reddit -->
<path d="M1468 1639.200a16 16 0 1 1-8.600 29.500l-6 2.100 2.400-5.400a16 16 0 0 1 12.200-26.200z" fill="#ff4500"/>
<ellipse cx="1468" cy="1658.400" rx="11" ry="8" fill="#fff"/><circle cx="1457.800" cy="1653.800" r="3" fill="#fff"/><circle cx="1478.200" cy="1653.800" r="3" fill="#fff"/>
<circle cx="1463.400" cy="1657" r="1.900" fill="#ff4500"/><circle cx="1472.600" cy="1657" r="1.900" fill="#ff4500"/><path d="M1463.600 1661.400q4.400 3 8.800 0z" fill="#222"/>
<path d="M1468 1650.400l1.600-6 4.400 1" fill="none" stroke="#222" stroke-width="1.100"/><circle cx="1475" cy="1645.200" r="2.600" fill="#fff"/>
<!-- facebook -->
<rect x="1494" y="1639" width="32" height="32" rx="1.500" fill="#3b5998"/><rect x="1496.600" y="1663.600" width="26.800" height="4.400" fill="#6d84b4"/>
<path d="M1512.800 1671v-12.400h-4v-4.800h4v-3.200c0-4.200 2.400-6.600 6.400-6.600 1.400 0 2.800.1 3.600.2v4.300h-2.400c-2 0-2.600.9-2.600 2.500v2.800h4.800l-.7 4.800h-4.100v12.400z" fill="#fff"/>
<!-- twitter -->
<rect x="1536" y="1639" width="32" height="32" fill="#00a9ec"/>
<path transform="translate(1552 1655) scale(.86) translate(-1552 -1655)" d="M1561.800 1648.300c-.8.400-1.700.6-2.600.7.900-.6 1.700-1.500 2-2.600-.9.500-1.900.9-2.900 1.100a4.600 4.600 0 0 0-7.900 4.200c-3.800-.2-7.200-2-9.500-4.800a4.600 4.600 0 0 0 1.400 6.200c-.8 0-1.500-.2-2.100-.6 0 2.300 1.600 4.200 3.700 4.600-.7.200-1.400.2-2.100.1.600 1.800 2.300 3.200 4.300 3.200a9.300 9.300 0 0 1-6.800 1.900 13 13 0 0 0 7.100 2.100c8.500 0 13.400-7.200 13.100-13.700.9-.6 1.700-1.500 2.300-2.400z" fill="#fff"/>
</svg>
</body>
</html>
